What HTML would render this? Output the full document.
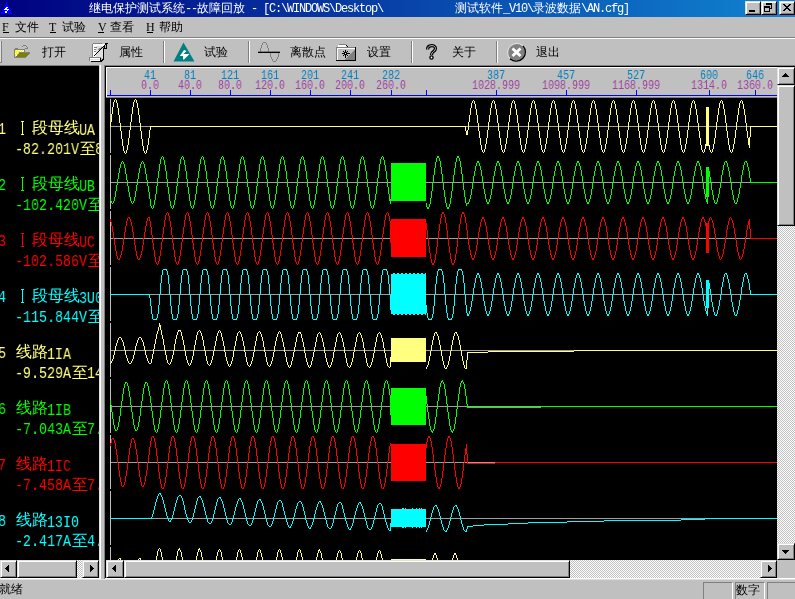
<!DOCTYPE html>
<html><head><meta charset="utf-8">
<style>
*{margin:0;padding:0;box-sizing:border-box}
html,body{width:795px;height:599px;overflow:hidden;background:#c0c0c0;position:relative;font-family:"Liberation Sans",sans-serif}
.a{position:absolute}
.t{position:absolute;white-space:pre;line-height:1;will-change:transform}
.m{font-family:"Liberation Mono",monospace}
.cj{font-size:12px}
.ck{background:repeating-conic-gradient(#fff 0 25%,#c0c0c0 0 50%) 0 0/2px 2px}
.btn{position:absolute;background:#c0c0c0;border-top:1px solid #dfdfdf;border-left:1px solid #dfdfdf;border-right:1px solid #000;border-bottom:1px solid #000;box-shadow:inset 1px 1px 0 #fff,inset -1px -1px 0 #808080}
.lbl{position:absolute;white-space:pre;line-height:16px;font-size:16px}
.rl{font-size:12px;transform:scaleX(0.8333);transform-origin:0 0}
.lm{font-family:"Liberation Mono",monospace;font-size:16px;transform:scaleX(0.8333);transform-origin:0 0}
.cjl{font-size:16px}
</style></head><body>
<!-- title bar -->
<div class="a" style="left:0;top:0;width:795px;height:17px;background:linear-gradient(to right,#000080,#1084d0)"></div>
<svg class="a" style="left:0;top:0" width="16" height="16" shape-rendering="crispEdges"><path d="M6 2h1v2h1v2h1v2h1v2h1v2h1v2H1v-2h1v-2h1v-2h1v-2h1v-2h1z" fill="#0000ff"/><path d="M6 7h2v1h-2zM5 8h2v1h-2zM4 9h5v1h-5zM7 10h1v1h-1zM5 11h2v2h-2z" fill="#fff"/></svg>
<div class="t" style="left:89px;top:2px;color:#fff;font-size:12px;font-weight:normal">继电保护测试系统<span class="m" style="font-size:12px;letter-spacing:-1.2px;font-weight:normal">--</span>故障回放<span class="m" style="font-size:12px;letter-spacing:-1.2px;font-weight:normal"> - [C:\WINDOWS\Desktop\</span></div>
<div class="t" style="left:455px;top:2px;color:#fff;font-size:12px;font-weight:normal">测试软件<span class="m" style="font-size:12px;letter-spacing:-1.2px;font-weight:normal">_V10\</span>录波数据<span class="m" style="font-size:12px;letter-spacing:-1.2px;font-weight:normal">\AN.cfg]</span></div>
<div class="btn" style="left:745px;top:1px;width:16px;height:14px"></div>
<div class="a" style="left:749px;top:10px;width:6px;height:2px;background:#000"></div>
<div class="btn" style="left:761px;top:1px;width:16px;height:14px"></div>
<svg class="a" style="left:0;top:0" width="795" height="17" shape-rendering="crispEdges"><path d="M766 3h6v2h-6zM771 5h1v4h-1zM770 8h1v1h-1zM764 6h6v2h-6zM764 8h1v4h-1zM769 8h1v4h-1zM764 11h6v1h-6z" fill="#000"/></svg>
<div class="btn" style="left:779px;top:1px;width:16px;height:14px"></div>
<svg class="a" style="left:0;top:0" width="795" height="17" shape-rendering="crispEdges"><path d="M783 4h1v1h-1zM784 4h1v1h-1zM789 4h1v1h-1zM790 4h1v1h-1zM784 5h1v1h-1zM785 5h1v1h-1zM788 5h1v1h-1zM789 5h1v1h-1zM785 6h1v1h-1zM786 6h1v1h-1zM787 6h1v1h-1zM788 6h1v1h-1zM786 7h1v1h-1zM787 7h1v1h-1zM785 8h1v1h-1zM786 8h1v1h-1zM787 8h1v1h-1zM788 8h1v1h-1zM784 9h1v1h-1zM785 9h1v1h-1zM788 9h1v1h-1zM789 9h1v1h-1zM783 10h1v1h-1zM784 10h1v1h-1zM789 10h1v1h-1zM790 10h1v1h-1z" fill="#000"/></svg>
<!-- menu -->
<div class="a" style="left:0;top:37px;width:795px;height:1px;background:#808080"></div>
<div class="a" style="left:0;top:38px;width:795px;height:1px;background:#fff"></div>
<div class="t" style="left:2px;top:21px;font-family:'Liberation Serif',serif;font-size:12px;color:#000">F</div><div class="a" style="left:3px;top:32px;width:6px;height:1px;background:#000"></div><div class="t" style="left:15px;top:21px;font-size:12px;color:#000">文件</div>
<div class="t" style="left:49px;top:21px;font-family:'Liberation Serif',serif;font-size:12px;color:#000">T</div><div class="a" style="left:50px;top:32px;width:6px;height:1px;background:#000"></div><div class="t" style="left:62px;top:21px;font-size:12px;color:#000">试验</div>
<div class="t" style="left:98px;top:21px;font-family:'Liberation Serif',serif;font-size:12px;color:#000">V</div><div class="a" style="left:98px;top:32px;width:6px;height:1px;background:#000"></div><div class="t" style="left:110px;top:21px;font-size:12px;color:#000">查看</div>
<div class="t" style="left:146px;top:21px;font-family:'Liberation Serif',serif;font-size:12px;color:#000">H</div><div class="a" style="left:147px;top:32px;width:6px;height:1px;background:#000"></div><div class="t" style="left:159px;top:21px;font-size:12px;color:#000">帮助</div>
<!-- toolbar -->
<div class="a" style="left:0;top:41px;width:1px;height:21px;background:#dfdfdf"></div>
<div class="a" style="left:1px;top:41px;width:1px;height:22px;background:#808080"></div>
<div class="a" style="left:0;top:62px;width:2px;height:1px;background:#808080"></div>
<svg class="a" style="left:0;top:0" width="40" height="64" shape-rendering="crispEdges">
 <rect x="15" y="48" width="3" height="1" fill="#808080"/>
 <rect x="14" y="49" width="1" height="9" fill="#808080"/>
 <rect x="15" y="49" width="10" height="1" fill="#808080"/>
 <rect x="24" y="50" width="1" height="2" fill="#808080"/>
 <rect x="14" y="57" width="12" height="1" fill="#808080"/>
 <path d="M15 50h9v2h-5l-4 5z" fill="#ffff00"/>
 <path d="M16 50h1v1h-1zM18 50h1v1h-1zM20 51h1v1h-1zM22 51h1v1h-1zM17 52h1v1h-1zM15 53h1v1h-1zM16 55h1v1h-1zM19 50h1v1h-1zM21 50h1v1h-1zM23 50h1v1h-1z" fill="#fff"/>
 <path d="M19 53h10l-4 4H15z" fill="#808000"/>
 <rect x="19" y="52" width="11" height="1" fill="#808080"/>
 <path d="M29 53h1v1h-1zM28 54h1v1h-1zM27 55h1v1h-1zM26 56h1v1h-1z" fill="#808080"/>
 <path d="M22 46h1v1h-1zM23 45h3v1h-3zM26 46h1v1h-1zM27 47h1v1h-1zM25 48h3v1h-3zM27 47h1v1h-1z" fill="#808080"/>
</svg>
<div class="t" style="left:42px;top:46px;font-size:12px;color:#000">打开</div>
<svg class="a" style="left:0;top:0" width="112" height="64" shape-rendering="crispEdges">
 <rect x="93" y="43" width="9" height="1" fill="#808080"/>
 <rect x="92" y="44" width="1" height="14" fill="#808080"/>
 <rect x="93" y="44" width="10" height="14" fill="#fff"/>
 <rect x="96" y="46" width="7" height="12" fill="#dfdfdf"/>
 <rect x="103" y="46" width="1" height="14" fill="#000"/>
 <path d="M94 47h3v1h-3zM94 49h2v1h-2zM94 51h2v1h-2z" fill="#808080"/>
 <rect x="89" y="57" width="12" height="4" fill="#fff"/>
 <rect x="89" y="57" width="12" height="1" fill="#808080"/>
 <rect x="89" y="57" width="1" height="4" fill="#808080"/>
 <rect x="90" y="59" width="10" height="1" fill="#dfdfdf"/>
 <rect x="91" y="61" width="11" height="1" fill="#000"/>
 <path d="M100 58h1v3h-1zM101 60h2v1h-2zM102 59h1v1h-1z" fill="#000"/>
 <path d="M98 49h2v1h-2zM99 48h3v1h-3zM101 47h3v1h-3zM103 46h2v1h-2z" fill="#808080"/>
 <path d="M94 55h1v1h-1zM95 54h1v1h-1zM96 53h1v1h-1zM97 52h1v1h-1zM98 51h1v1h-1zM99 50h1v1h-1zM100 49h1v1h-1zM101 48h1v1h-1zM102 47h1v1h-1zM103 46h1v1h-1zM104 45h1v1h-1z" fill="#000"/>
 <path d="M105 44h2v1h-2zM104 46h1v3h-1zM105 48h2v1h-2zM106 45h1v3h-1zM105 43h3v1h-3z" fill="#000"/>
 <path d="M102 45h2v1h-2zM103 44h2v1h-2z" fill="#fff"/>
</svg>
<div class="t" style="left:119px;top:46px;font-size:12px;color:#000">属性</div>
<div class="a" style="left:163px;top:41px;width:1px;height:22px;background:#808080"></div>
<div class="a" style="left:164px;top:41px;width:1px;height:22px;background:#fff"></div>
<svg class="a" style="left:0;top:0" width="200" height="64"><path d="M183.5 42.5L194.5 61.5H173.5z" fill="#008080"/><path d="M184 50L186.5 51L183.5 54H189.5L184 59.5H183V56H180L180.5 55z" fill="#fff"/></svg>
<div class="t" style="left:204px;top:46px;font-size:12px;color:#000">试验</div>
<div class="a" style="left:248px;top:41px;width:1px;height:22px;background:#808080"></div>
<div class="a" style="left:249px;top:41px;width:1px;height:22px;background:#fff"></div>
<svg class="a" style="left:0;top:0" width="290" height="64" shape-rendering="crispEdges">
 <path d="M263 42h3v1h-3zM262 43h1v2h-1zM266 43h1v2h-1zM261 45h1v3h-1zM267 45h1v3h-1zM260 48h1v4h-1zM268 48h1v4h-1z" fill="#808080"/>
 <path d="M270 53h1v4h-1zM278 53h1v4h-1zM271 57h1v2h-1zM277 57h1v2h-1zM272 59h1v2h-1zM276 59h1v2h-1zM273 61h3v1h-3z" fill="#808080"/>
 <rect x="258" y="52" width="22" height="1" fill="#000"/>
 <rect x="258" y="51" width="22" height="1" fill="#404040" opacity="0.5"/>
</svg>
<div class="t" style="left:290px;top:46px;font-size:12px;color:#000">离散点</div>
<svg class="a" style="left:0;top:0" width="360" height="64" shape-rendering="crispEdges">
 <rect x="339" y="44" width="7" height="1" fill="#808080"/>
 <rect x="338" y="45" width="8" height="2" fill="#fff"/>
 <path d="M346 45h1v1h-1zM347 46h1v1h-1z" fill="#000"/>
 <rect x="336" y="47" width="19" height="1" fill="#808080"/>
 <rect x="336" y="47" width="1" height="13" fill="#808080"/>
 <rect x="337" y="48" width="18" height="12" fill="#fff"/>
 <rect x="338" y="49" width="17" height="11" fill="#c0c0c0"/>
 <path d="M355 49V60H344z" fill="#808080"/>
 <rect x="355" y="47" width="1" height="14" fill="#000"/>
 <rect x="336" y="60" width="20" height="1" fill="#000"/>
 <rect x="345" y="50" width="1" height="8" fill="#000"/>
 <rect x="342" y="53" width="8" height="1" fill="#000"/>
 <rect x="344" y="52" width="3" height="3" fill="#000"/>
 <rect x="345" y="53" width="1" height="1" fill="#fff"/>
 <path d="M343 51h1v1h-1zM347 51h1v1h-1zM343 55h1v1h-1zM347 55h1v1h-1z" fill="#000"/>
</svg>
<div class="t" style="left:367px;top:46px;font-size:12px;color:#000">设置</div>
<div class="a" style="left:411px;top:41px;width:1px;height:22px;background:#808080"></div>
<div class="a" style="left:412px;top:41px;width:1px;height:22px;background:#fff"></div>
<svg class="a" style="left:0;top:0" width="450" height="64">
 <path d="M427.5 49.5C427.5 44.5 435.5 44.5 435.5 48.5C435.5 51.5 431.5 51.5 431.5 54.5V55" fill="none" stroke="#000" stroke-width="3.2"/>
 <path d="M427.5 49.5C427.5 44.5 435.5 44.5 435.5 48.5C435.5 51.5 431.5 51.5 431.5 54.5V55" fill="none" stroke="#c0c0c0" stroke-width="1"/>
 <circle cx="431.5" cy="57.5" r="1.6" fill="#fff" stroke="#000" stroke-width="1.4"/>
</svg>
<div class="t" style="left:452px;top:46px;font-size:12px;color:#000">关于</div>
<div class="a" style="left:496px;top:41px;width:1px;height:22px;background:#808080"></div>
<div class="a" style="left:497px;top:41px;width:1px;height:22px;background:#fff"></div>
<svg class="a" style="left:0;top:0" width="530" height="64">
 <circle cx="516.5" cy="52.3" r="9.2" fill="#808080"/>
 <path d="M510 58.8A9.2 9.2 0 0 1 523 45.8" fill="none" stroke="#dfdfdf" stroke-width="1.2"/>
 <path d="M523 45.8A9.2 9.2 0 0 1 510 58.8" fill="none" stroke="#000" stroke-width="1.2"/>
 <path d="M512.5 48.5l8 7.5M520.5 48.5l-8 7.5" stroke="#fff" stroke-width="2.8"/>
</svg>
<div class="t" style="left:536px;top:46px;font-size:12px;color:#000">退出</div>
<!-- left pane -->
<div class="a" style="left:0;top:65px;width:99px;height:1px;background:#808080"></div>
<div class="a" style="left:0;top:66px;width:99px;height:494px;background:#000"></div>
<div class="a" style="left:99px;top:65px;width:1px;height:514px;background:#dfdfdf"></div>
<div class="a" style="left:100px;top:65px;width:1px;height:514px;background:#fff"></div>
<div class="a" style="left:0;top:578px;width:101px;height:1px;background:#fff"></div>
<!-- left labels -->
<div class="a" style="left:0;top:98px;width:99px;height:70px;overflow:hidden;color:#ffff80"><div class="t lm" style="left:-2px;top:24px">1</div><div class="a" style="left:21px;top:23px;width:3px;height:14px;border-top:1px solid #ffff80;border-bottom:1px solid #ffff80"></div><div class="a" style="left:22px;top:23px;width:1px;height:14px;background:#ffff80"></div><div class="t cjl" style="left:32px;top:22px">段母线</div><div class="t lm" style="left:79px;top:25px">UA</div><div class="t lm" style="left:15px;top:44px">-82.201V</div><div class="t cjl" style="left:80px;top:43px">至</div><div class="t lm" style="left:95px;top:44px">8</div></div>
<div class="a" style="left:0;top:154px;width:99px;height:70px;overflow:hidden;color:#00ff00"><div class="t lm" style="left:-2px;top:24px">2</div><div class="a" style="left:21px;top:23px;width:3px;height:14px;border-top:1px solid #00ff00;border-bottom:1px solid #00ff00"></div><div class="a" style="left:22px;top:23px;width:1px;height:14px;background:#00ff00"></div><div class="t cjl" style="left:32px;top:22px">段母线</div><div class="t lm" style="left:79px;top:25px">UB</div><div class="t lm" style="left:15px;top:44px">-102.420V</div><div class="t cjl" style="left:88px;top:43px">至</div><div class="t lm" style="left:103px;top:44px"></div></div>
<div class="a" style="left:0;top:210px;width:99px;height:70px;overflow:hidden;color:#ff0000"><div class="t lm" style="left:-2px;top:24px">3</div><div class="a" style="left:21px;top:23px;width:3px;height:14px;border-top:1px solid #ff0000;border-bottom:1px solid #ff0000"></div><div class="a" style="left:22px;top:23px;width:1px;height:14px;background:#ff0000"></div><div class="t cjl" style="left:32px;top:22px">段母线</div><div class="t lm" style="left:79px;top:25px">UC</div><div class="t lm" style="left:15px;top:44px">-102.586V</div><div class="t cjl" style="left:88px;top:43px">至</div><div class="t lm" style="left:103px;top:44px"></div></div>
<div class="a" style="left:0;top:266px;width:99px;height:70px;overflow:hidden;color:#00ffff"><div class="t lm" style="left:-2px;top:24px">4</div><div class="a" style="left:21px;top:23px;width:3px;height:14px;border-top:1px solid #00ffff;border-bottom:1px solid #00ffff"></div><div class="a" style="left:22px;top:23px;width:1px;height:14px;background:#00ffff"></div><div class="t cjl" style="left:32px;top:22px">段母线</div><div class="t lm" style="left:79px;top:25px">3U0</div><div class="t lm" style="left:15px;top:44px">-115.844V</div><div class="t cjl" style="left:88px;top:43px">至</div><div class="t lm" style="left:103px;top:44px"></div></div>
<div class="a" style="left:0;top:322px;width:99px;height:70px;overflow:hidden;color:#ffff80"><div class="t lm" style="left:-2px;top:24px">5</div><div class="t cjl" style="left:16px;top:22px">线路</div><div class="t lm" style="left:47px;top:25px">1IA</div><div class="t lm" style="left:15px;top:44px">-9.529A</div><div class="t cjl" style="left:72px;top:43px">至</div><div class="t lm" style="left:87px;top:44px">14</div></div>
<div class="a" style="left:0;top:378px;width:99px;height:70px;overflow:hidden;color:#00ff00"><div class="t lm" style="left:-2px;top:24px">6</div><div class="t cjl" style="left:16px;top:22px">线路</div><div class="t lm" style="left:47px;top:25px">1IB</div><div class="t lm" style="left:15px;top:44px">-7.043A</div><div class="t cjl" style="left:72px;top:43px">至</div><div class="t lm" style="left:87px;top:44px">7.</div></div>
<div class="a" style="left:0;top:434px;width:99px;height:70px;overflow:hidden;color:#ff0000"><div class="t lm" style="left:-2px;top:24px">7</div><div class="t cjl" style="left:16px;top:22px">线路</div><div class="t lm" style="left:47px;top:25px">1IC</div><div class="t lm" style="left:15px;top:44px">-7.458A</div><div class="t cjl" style="left:72px;top:43px">至</div><div class="t lm" style="left:87px;top:44px">7.</div></div>
<div class="a" style="left:0;top:490px;width:99px;height:70px;overflow:hidden;color:#00ffff"><div class="t lm" style="left:-2px;top:24px">8</div><div class="t cjl" style="left:16px;top:22px">线路</div><div class="t lm" style="left:47px;top:25px">13I0</div><div class="t lm" style="left:15px;top:44px">-2.417A</div><div class="t cjl" style="left:72px;top:43px">至</div><div class="t lm" style="left:87px;top:44px">4.</div></div>
<!-- left scrollbar -->
<div class="a ck" style="left:0;top:560px;width:99px;height:18px"></div>
<div class="btn" style="left:0;top:560px;width:17px;height:18px"></div>
<svg class="a" style="left:0;top:560px" width="17" height="18" shape-rendering="crispEdges"><path d="M5 8h1v1h-1zM6 7h1v3h-1zM7 6h1v5h-1zM8 5h1v7h-1z" fill="#000"/></svg>
<div class="btn" style="left:17px;top:560px;width:60px;height:18px"></div>
<div class="btn" style="left:82px;top:560px;width:17px;height:18px"></div>
<svg class="a" style="left:82px;top:560px" width="17" height="18" shape-rendering="crispEdges"><path d="M11 8h1v1h-1zM10 7h1v3h-1zM9 6h1v5h-1zM8 5h1v7h-1z" fill="#000"/></svg>
<!-- right pane -->
<div class="a" style="left:104px;top:65px;width:691px;height:1px;background:#808080"></div>
<div class="a" style="left:104px;top:65px;width:1px;height:514px;background:#808080"></div>
<div class="a" style="left:105px;top:66px;width:690px;height:1px;background:#000"></div>
<div class="a" style="left:105px;top:66px;width:1px;height:512px;background:#000"></div>
<div class="a" style="left:105px;top:578px;width:690px;height:1px;background:#fff"></div>
<!-- ruler -->
<div class="a" style="left:106px;top:67px;width:671px;height:31px;background:#c0c0c0;border-top:1px solid #fff;border-left:1px solid #fff"></div>
<div class="a" style="left:106px;top:97px;width:671px;height:1px;background:#808080"></div>
<div class="a" style="left:107px;top:95px;width:670px;height:1px;background:#0000ff"></div>
<div class="a" style="left:110px;top:90px;width:1px;height:5px;background:#0000ff"></div>
<div class="a" style="left:150px;top:90px;width:1px;height:5px;background:#0000ff"></div>
<div class="a" style="left:190px;top:90px;width:1px;height:5px;background:#0000ff"></div>
<div class="a" style="left:230px;top:90px;width:1px;height:5px;background:#0000ff"></div>
<div class="a" style="left:270px;top:90px;width:1px;height:5px;background:#0000ff"></div>
<div class="a" style="left:310px;top:90px;width:1px;height:5px;background:#0000ff"></div>
<div class="a" style="left:350px;top:90px;width:1px;height:5px;background:#0000ff"></div>
<div class="a" style="left:391px;top:90px;width:1px;height:5px;background:#0000ff"></div>
<div class="a" style="left:426px;top:90px;width:1px;height:5px;background:#0000ff"></div>
<div class="a" style="left:496px;top:90px;width:1px;height:5px;background:#0000ff"></div>
<div class="a" style="left:566px;top:90px;width:1px;height:5px;background:#0000ff"></div>
<div class="a" style="left:636px;top:90px;width:1px;height:5px;background:#0000ff"></div>
<div class="a" style="left:709px;top:90px;width:1px;height:5px;background:#0000ff"></div>
<div class="a" style="left:755px;top:90px;width:1px;height:5px;background:#0000ff"></div>
<div class="t m rl" style="left:144px;top:70px;color:#0080c0">41</div>
<div class="t m rl" style="left:141px;top:80px;color:#a040a0">0.0</div>
<div class="t m rl" style="left:184px;top:70px;color:#0080c0">81</div>
<div class="t m rl" style="left:178px;top:80px;color:#a040a0">40.0</div>
<div class="t m rl" style="left:221px;top:70px;color:#0080c0">121</div>
<div class="t m rl" style="left:218px;top:80px;color:#a040a0">80.0</div>
<div class="t m rl" style="left:261px;top:70px;color:#0080c0">161</div>
<div class="t m rl" style="left:255px;top:80px;color:#a040a0">120.0</div>
<div class="t m rl" style="left:301px;top:70px;color:#0080c0">201</div>
<div class="t m rl" style="left:295px;top:80px;color:#a040a0">160.0</div>
<div class="t m rl" style="left:341px;top:70px;color:#0080c0">241</div>
<div class="t m rl" style="left:335px;top:80px;color:#a040a0">200.0</div>
<div class="t m rl" style="left:382px;top:70px;color:#0080c0">282</div>
<div class="t m rl" style="left:376px;top:80px;color:#a040a0">260.0</div>
<div class="t m rl" style="left:487px;top:70px;color:#0080c0">387</div>
<div class="t m rl" style="left:472px;top:80px;color:#a040a0">1028.999</div>
<div class="t m rl" style="left:557px;top:70px;color:#0080c0">457</div>
<div class="t m rl" style="left:542px;top:80px;color:#a040a0">1098.999</div>
<div class="t m rl" style="left:627px;top:70px;color:#0080c0">527</div>
<div class="t m rl" style="left:612px;top:80px;color:#a040a0">1168.999</div>
<div class="t m rl" style="left:700px;top:70px;color:#0080c0">600</div>
<div class="t m rl" style="left:691px;top:80px;color:#a040a0">1314.0</div>
<div class="t m rl" style="left:746px;top:70px;color:#0080c0">646</div>
<div class="t m rl" style="left:737px;top:80px;color:#a040a0">1360.0</div>
<!-- wave area -->
<div class="a" style="left:106px;top:98px;width:671px;height:462px;background:#000"></div>
<svg class="a" style="left:0;top:0" width="795" height="599" shape-rendering="crispEdges">
<path fill="#a0a0a0" d="M110 126h667v1h-667zM110 182h667v1h-667zM110 238h667v1h-667zM110 294h667v1h-667zM110 350h667v1h-667zM110 406h667v1h-667zM110 462h667v1h-667zM110 518h667v1h-667z"/>
<path fill="#c0c0c0" d="M110 99h1v54h-1zM110 155h1v54h-1zM110 211h1v54h-1zM110 267h1v54h-1zM110 323h1v54h-1zM110 379h1v54h-1zM110 435h1v54h-1zM110 491h1v54h-1zM110 547h1v13h-1z"/>
<path fill="#ffff80" d="M115 99h1v1h-1zM135 99h1v1h-1zM473 100h1v1h-1zM493 100h1v1h-1zM513 100h1v1h-1zM533 100h1v1h-1zM553 100h1v1h-1zM573 100h1v1h-1zM593 100h1v1h-1zM613 100h1v1h-1zM633 100h1v1h-1zM653 100h1v1h-1zM673 100h1v1h-1zM693 100h1v1h-1zM721 100h1v1h-1zM741 100h1v1h-1zM114 100h1v2h-1zM134 100h1v2h-1zM116 100h1v3h-1zM136 100h1v3h-1zM472 101h1v2h-1zM492 101h1v2h-1zM512 101h1v2h-1zM532 101h1v2h-1zM552 101h1v2h-1zM572 101h1v2h-1zM592 101h1v2h-1zM612 101h1v2h-1zM632 101h1v2h-1zM652 101h1v2h-1zM672 101h1v2h-1zM692 101h1v2h-1zM720 101h1v2h-1zM740 101h1v2h-1zM474 101h1v3h-1zM494 101h1v3h-1zM514 101h1v3h-1zM534 101h1v3h-1zM554 101h1v3h-1zM574 101h1v3h-1zM594 101h1v3h-1zM614 101h1v3h-1zM634 101h1v3h-1zM654 101h1v3h-1zM674 101h1v3h-1zM694 101h1v3h-1zM722 101h1v3h-1zM742 101h1v3h-1zM113 102h1v5h-1zM133 102h1v5h-1zM117 103h1v5h-1zM137 103h1v5h-1zM471 103h1v5h-1zM491 103h1v5h-1zM511 103h1v5h-1zM531 103h1v5h-1zM551 103h1v5h-1zM571 103h1v5h-1zM591 103h1v5h-1zM611 103h1v5h-1zM631 103h1v5h-1zM651 103h1v5h-1zM671 103h1v5h-1zM691 103h1v5h-1zM719 103h1v5h-1zM739 103h1v5h-1zM475 104h1v5h-1zM495 104h1v5h-1zM515 104h1v5h-1zM535 104h1v5h-1zM555 104h1v5h-1zM575 104h1v5h-1zM595 104h1v5h-1zM615 104h1v5h-1zM635 104h1v5h-1zM655 104h1v5h-1zM675 104h1v5h-1zM695 104h1v5h-1zM723 104h1v5h-1zM743 104h1v5h-1zM112 107h1v7h-1zM132 107h1v7h-1zM118 108h1v7h-1zM138 108h1v7h-1zM470 108h1v7h-1zM490 108h1v7h-1zM510 108h1v7h-1zM530 108h1v7h-1zM550 108h1v7h-1zM570 108h1v7h-1zM590 108h1v7h-1zM610 108h1v7h-1zM630 108h1v7h-1zM650 108h1v7h-1zM670 108h1v7h-1zM690 108h1v7h-1zM718 108h1v7h-1zM738 108h1v7h-1zM476 109h1v6h-1zM496 109h1v6h-1zM516 109h1v6h-1zM536 109h1v6h-1zM556 109h1v6h-1zM576 109h1v6h-1zM596 109h1v6h-1zM616 109h1v6h-1zM636 109h1v6h-1zM656 109h1v6h-1zM676 109h1v6h-1zM696 109h1v6h-1zM724 109h1v6h-1zM744 109h1v6h-1zM111 114h1v8h-1zM131 114h1v8h-1zM469 115h1v7h-1zM489 115h1v7h-1zM509 115h1v7h-1zM529 115h1v7h-1zM549 115h1v7h-1zM569 115h1v7h-1zM589 115h1v7h-1zM609 115h1v7h-1zM629 115h1v7h-1zM649 115h1v7h-1zM669 115h1v7h-1zM689 115h1v7h-1zM717 115h1v7h-1zM737 115h1v7h-1zM119 115h1v8h-1zM139 115h1v8h-1zM477 115h1v8h-1zM497 115h1v8h-1zM517 115h1v8h-1zM537 115h1v8h-1zM557 115h1v8h-1zM577 115h1v8h-1zM597 115h1v8h-1zM617 115h1v8h-1zM637 115h1v8h-1zM657 115h1v8h-1zM677 115h1v8h-1zM697 115h1v8h-1zM725 115h1v8h-1zM745 115h1v8h-1zM110 122h1v5h-1zM130 122h1v8h-1zM468 122h1v8h-1zM488 122h1v8h-1zM508 122h1v8h-1zM528 122h1v8h-1zM548 122h1v8h-1zM568 122h1v8h-1zM588 122h1v8h-1zM608 122h1v8h-1zM628 122h1v8h-1zM648 122h1v8h-1zM668 122h1v8h-1zM688 122h1v8h-1zM716 122h1v8h-1zM736 122h1v8h-1zM120 123h1v8h-1zM140 123h1v8h-1zM478 123h1v8h-1zM498 123h1v8h-1zM518 123h1v8h-1zM538 123h1v8h-1zM558 123h1v8h-1zM578 123h1v8h-1zM598 123h1v8h-1zM618 123h1v8h-1zM638 123h1v8h-1zM658 123h1v8h-1zM678 123h1v8h-1zM698 123h1v8h-1zM726 123h1v8h-1zM746 123h1v8h-1zM151 126h314v1h-314zM751 126h26v1h-26zM150 126h1v4h-1zM465 126h1v5h-1zM750 126h1v11h-1zM467 130h1v5h-1zM129 130h1v8h-1zM149 130h1v8h-1zM487 130h1v8h-1zM507 130h1v8h-1zM527 130h1v8h-1zM547 130h1v8h-1zM567 130h1v8h-1zM587 130h1v8h-1zM607 130h1v8h-1zM627 130h1v8h-1zM647 130h1v8h-1zM667 130h1v8h-1zM687 130h1v8h-1zM715 130h1v8h-1zM735 130h1v8h-1zM466 131h1v4h-1zM479 131h1v7h-1zM499 131h1v7h-1zM519 131h1v7h-1zM539 131h1v7h-1zM559 131h1v7h-1zM579 131h1v7h-1zM599 131h1v7h-1zM619 131h1v7h-1zM639 131h1v7h-1zM659 131h1v7h-1zM679 131h1v7h-1zM699 131h1v7h-1zM727 131h1v7h-1zM747 131h1v7h-1zM121 131h1v8h-1zM141 131h1v8h-1zM707 134h1v4h-1zM749 137h1v11h-1zM486 138h1v6h-1zM506 138h1v6h-1zM526 138h1v6h-1zM546 138h1v6h-1zM566 138h1v6h-1zM586 138h1v6h-1zM606 138h1v6h-1zM626 138h1v6h-1zM646 138h1v6h-1zM666 138h1v6h-1zM686 138h1v6h-1zM706 138h1v6h-1zM714 138h1v6h-1zM734 138h1v6h-1zM128 138h1v7h-1zM148 138h1v7h-1zM480 138h1v7h-1zM500 138h1v7h-1zM520 138h1v7h-1zM540 138h1v7h-1zM560 138h1v7h-1zM580 138h1v7h-1zM600 138h1v7h-1zM620 138h1v7h-1zM640 138h1v7h-1zM660 138h1v7h-1zM680 138h1v7h-1zM700 138h1v7h-1zM708 138h1v7h-1zM728 138h1v7h-1zM748 138h1v7h-1zM122 139h1v7h-1zM142 139h1v7h-1zM485 144h1v5h-1zM505 144h1v5h-1zM525 144h1v5h-1zM545 144h1v5h-1zM565 144h1v5h-1zM585 144h1v5h-1zM605 144h1v5h-1zM625 144h1v5h-1zM645 144h1v5h-1zM665 144h1v5h-1zM685 144h1v5h-1zM705 144h1v5h-1zM713 144h1v5h-1zM733 144h1v5h-1zM127 145h1v5h-1zM147 145h1v5h-1zM481 145h1v5h-1zM501 145h1v5h-1zM521 145h1v5h-1zM541 145h1v5h-1zM561 145h1v5h-1zM581 145h1v5h-1zM601 145h1v5h-1zM621 145h1v5h-1zM641 145h1v5h-1zM661 145h1v5h-1zM681 145h1v5h-1zM701 145h1v5h-1zM709 145h1v5h-1zM729 145h1v5h-1zM123 146h1v5h-1zM143 146h1v5h-1zM484 149h1v3h-1zM504 149h1v3h-1zM524 149h1v3h-1zM544 149h1v3h-1zM564 149h1v3h-1zM584 149h1v3h-1zM604 149h1v3h-1zM624 149h1v3h-1zM644 149h1v3h-1zM664 149h1v3h-1zM684 149h1v3h-1zM704 149h1v3h-1zM712 149h1v3h-1zM732 149h1v3h-1zM482 150h1v2h-1zM502 150h1v2h-1zM522 150h1v2h-1zM542 150h1v2h-1zM562 150h1v2h-1zM582 150h1v2h-1zM602 150h1v2h-1zM622 150h1v2h-1zM642 150h1v2h-1zM662 150h1v2h-1zM682 150h1v2h-1zM702 150h1v2h-1zM710 150h1v2h-1zM730 150h1v2h-1zM126 150h1v3h-1zM146 150h1v3h-1zM124 151h1v2h-1zM144 151h1v2h-1zM483 152h1v1h-1zM503 152h1v1h-1zM523 152h1v1h-1zM543 152h1v1h-1zM563 152h1v1h-1zM583 152h1v1h-1zM603 152h1v1h-1zM623 152h1v1h-1zM643 152h1v1h-1zM663 152h1v1h-1zM683 152h1v1h-1zM703 152h1v1h-1zM711 152h1v1h-1zM731 152h1v1h-1zM125 153h1v1h-1zM145 153h1v1h-1zM159 323h1v4h-1zM160 325h1v5h-1zM158 327h1v4h-1zM179 330h1v1h-1zM199 330h1v1h-1zM219 330h1v1h-1zM178 330h1v2h-1zM180 330h1v2h-1zM161 330h1v5h-1zM198 331h1v1h-1zM239 331h1v1h-1zM259 331h1v1h-1zM279 331h1v1h-1zM200 331h1v2h-1zM218 331h1v2h-1zM220 331h1v2h-1zM157 331h1v3h-1zM238 332h1v1h-1zM258 332h1v1h-1zM299 332h1v1h-1zM319 332h1v1h-1zM339 332h1v1h-1zM359 332h1v1h-1zM379 332h1v1h-1zM435 332h1v1h-1zM455 332h1v1h-1zM240 332h1v2h-1zM260 332h1v2h-1zM278 332h1v2h-1zM280 332h1v2h-1zM298 332h1v2h-1zM300 332h1v2h-1zM436 332h1v2h-1zM456 332h1v2h-1zM177 332h1v3h-1zM197 332h1v3h-1zM181 332h1v4h-1zM318 333h1v1h-1zM338 333h1v1h-1zM358 333h1v1h-1zM378 333h1v1h-1zM320 333h1v2h-1zM340 333h1v2h-1zM360 333h1v2h-1zM380 333h1v2h-1zM201 333h1v3h-1zM217 333h1v3h-1zM237 333h1v3h-1zM257 333h1v3h-1zM434 333h1v3h-1zM454 333h1v3h-1zM221 333h1v4h-1zM437 334h1v2h-1zM457 334h1v2h-1zM241 334h1v3h-1zM261 334h1v3h-1zM277 334h1v3h-1zM297 334h1v3h-1zM317 334h1v3h-1zM337 334h1v3h-1zM357 334h1v3h-1zM377 334h1v3h-1zM281 334h1v4h-1zM301 334h1v4h-1zM156 334h1v5h-1zM321 335h1v3h-1zM341 335h1v3h-1zM361 335h1v3h-1zM381 335h1v3h-1zM162 335h1v4h-1zM176 335h1v4h-1zM196 335h1v5h-1zM182 336h1v4h-1zM202 336h1v4h-1zM433 336h1v4h-1zM438 336h1v4h-1zM453 336h1v4h-1zM458 336h1v4h-1zM216 336h1v5h-1zM236 336h1v5h-1zM256 336h1v5h-1zM119 337h2v1h-2zM139 337h2v1h-2zM222 337h1v4h-1zM242 337h1v4h-1zM262 337h1v4h-1zM276 337h1v4h-1zM296 337h1v5h-1zM316 337h1v5h-1zM336 337h1v5h-1zM356 337h1v5h-1zM376 337h1v5h-1zM118 338h1v2h-1zM121 338h1v2h-1zM138 338h1v2h-1zM141 338h1v2h-1zM282 338h1v4h-1zM302 338h1v4h-1zM322 338h1v4h-1zM342 338h1v4h-1zM362 338h1v4h-1zM382 338h1v4h-1zM155 339h1v5h-1zM175 339h1v5h-1zM163 339h1v6h-1zM122 340h1v2h-1zM142 340h1v2h-1zM117 340h1v3h-1zM137 340h1v3h-1zM183 340h1v5h-1zM195 340h1v5h-1zM432 340h1v5h-1zM439 340h1v5h-1zM452 340h1v5h-1zM459 340h1v5h-1zM203 340h1v6h-1zM215 341h1v5h-1zM223 341h1v5h-1zM235 341h1v5h-1zM243 341h1v5h-1zM255 341h1v5h-1zM275 341h1v5h-1zM263 341h1v6h-1zM123 342h1v4h-1zM143 342h1v4h-1zM283 342h1v5h-1zM295 342h1v5h-1zM303 342h1v5h-1zM315 342h1v5h-1zM323 342h1v5h-1zM335 342h1v5h-1zM343 342h1v5h-1zM355 342h1v5h-1zM375 342h1v5h-1zM363 342h1v6h-1zM383 342h1v6h-1zM116 343h1v3h-1zM136 343h1v3h-1zM154 344h1v5h-1zM174 344h1v6h-1zM164 345h1v5h-1zM194 345h1v5h-1zM440 345h1v5h-1zM460 345h1v5h-1zM184 345h1v6h-1zM431 345h1v6h-1zM451 345h1v6h-1zM124 346h1v4h-1zM144 346h1v4h-1zM115 346h1v5h-1zM135 346h1v5h-1zM204 346h1v5h-1zM214 346h1v5h-1zM234 346h1v5h-1zM224 346h1v6h-1zM244 346h1v6h-1zM254 346h1v6h-1zM274 346h1v6h-1zM264 347h1v5h-1zM284 347h1v5h-1zM294 347h1v5h-1zM314 347h1v5h-1zM334 347h1v5h-1zM354 347h1v5h-1zM304 347h1v6h-1zM324 347h1v6h-1zM344 347h1v6h-1zM374 347h1v6h-1zM364 348h1v5h-1zM384 348h1v5h-1zM153 349h1v5h-1zM574 350h203v1h-203zM125 350h1v5h-1zM145 350h1v5h-1zM165 350h1v5h-1zM173 350h1v5h-1zM193 350h1v6h-1zM441 350h1v6h-1zM461 350h1v6h-1zM488 351h86v1h-86zM114 351h1v4h-1zM134 351h1v4h-1zM185 351h1v5h-1zM205 351h1v5h-1zM213 351h1v5h-1zM430 351h1v5h-1zM450 351h1v5h-1zM233 351h1v6h-1zM468 352h20v1h-20zM225 352h1v5h-1zM245 352h1v5h-1zM253 352h1v5h-1zM265 352h1v5h-1zM273 352h1v5h-1zM285 352h1v5h-1zM293 352h1v5h-1zM313 352h1v5h-1zM333 352h1v6h-1zM353 352h1v6h-1zM467 352h1v8h-1zM305 353h1v5h-1zM325 353h1v5h-1zM345 353h1v5h-1zM365 353h1v5h-1zM373 353h1v5h-1zM385 353h1v5h-1zM152 354h1v5h-1zM126 355h1v3h-1zM146 355h1v3h-1zM113 355h1v4h-1zM133 355h1v4h-1zM172 355h1v4h-1zM166 355h1v5h-1zM186 356h1v4h-1zM192 356h1v4h-1zM212 356h1v4h-1zM206 356h1v5h-1zM429 356h1v5h-1zM442 356h1v5h-1zM449 356h1v5h-1zM462 356h1v5h-1zM226 357h1v4h-1zM232 357h1v4h-1zM252 357h1v4h-1zM272 357h1v4h-1zM292 357h1v4h-1zM312 357h1v4h-1zM246 357h1v5h-1zM266 357h1v5h-1zM286 357h1v5h-1zM390 357h1v10h-1zM127 358h1v3h-1zM147 358h1v3h-1zM306 358h1v4h-1zM326 358h1v4h-1zM332 358h1v4h-1zM352 358h1v4h-1zM372 358h1v4h-1zM346 358h1v5h-1zM366 358h1v5h-1zM386 358h1v5h-1zM112 359h1v2h-1zM132 359h1v2h-1zM171 359h1v3h-1zM151 359h1v4h-1zM167 360h1v3h-1zM187 360h1v3h-1zM191 360h1v3h-1zM211 360h1v3h-1zM466 360h1v9h-1zM111 361h1v2h-1zM128 361h1v2h-1zM131 361h1v2h-1zM148 361h1v2h-1zM207 361h1v3h-1zM227 361h1v3h-1zM231 361h1v3h-1zM251 361h1v3h-1zM271 361h1v3h-1zM291 361h1v4h-1zM311 361h1v4h-1zM428 361h1v4h-1zM443 361h1v4h-1zM448 361h1v4h-1zM463 361h1v4h-1zM170 362h1v2h-1zM247 362h1v3h-1zM267 362h1v3h-1zM287 362h1v3h-1zM307 362h1v3h-1zM327 362h1v3h-1zM331 362h1v3h-1zM351 362h1v3h-1zM371 362h1v3h-1zM110 363h1v1h-1zM129 363h2v1h-2zM149 363h2v1h-2zM168 363h1v1h-1zM188 363h1v2h-1zM190 363h1v2h-1zM210 363h1v2h-1zM347 363h1v3h-1zM367 363h1v3h-1zM387 363h1v3h-1zM169 364h1v1h-1zM208 364h1v1h-1zM228 364h1v2h-1zM230 364h1v2h-1zM250 364h1v2h-1zM270 364h1v2h-1zM189 365h1v1h-1zM209 365h1v1h-1zM248 365h1v1h-1zM268 365h1v1h-1zM288 365h1v2h-1zM290 365h1v2h-1zM308 365h1v2h-1zM310 365h1v2h-1zM328 365h1v2h-1zM330 365h1v2h-1zM350 365h1v2h-1zM370 365h1v2h-1zM427 365h1v2h-1zM447 365h1v2h-1zM444 365h1v3h-1zM464 365h1v3h-1zM229 366h1v1h-1zM249 366h1v1h-1zM269 366h1v1h-1zM348 366h1v1h-1zM368 366h1v1h-1zM388 366h1v1h-1zM289 367h1v1h-1zM309 367h1v1h-1zM329 367h1v1h-1zM349 367h1v1h-1zM369 367h1v1h-1zM389 367h1v1h-1zM426 367h1v2h-1zM446 367h1v2h-1zM445 368h1v1h-1zM465 368h1v1h-1zM159 548h1v1h-1zM179 548h1v2h-1zM199 548h1v2h-1zM219 549h1v1h-1zM239 549h1v1h-1zM259 549h1v1h-1zM279 549h1v1h-1zM299 549h1v1h-1zM158 549h1v2h-1zM178 549h1v2h-1zM319 549h1v2h-1zM160 549h1v3h-1zM198 549h1v3h-1zM339 550h1v1h-1zM359 550h1v1h-1zM379 550h1v1h-1zM180 550h1v2h-1zM200 550h1v2h-1zM218 550h1v2h-1zM220 550h1v2h-1zM238 550h1v2h-1zM258 550h1v2h-1zM278 550h1v2h-1zM298 550h1v2h-1zM240 550h1v3h-1zM260 550h1v3h-1zM280 550h1v3h-1zM300 550h1v3h-1zM318 550h1v3h-1zM320 551h1v2h-1zM338 551h1v2h-1zM340 551h1v2h-1zM358 551h1v2h-1zM360 551h1v2h-1zM378 551h1v2h-1zM380 551h1v3h-1zM157 551h1v5h-1zM177 551h1v5h-1zM197 552h1v4h-1zM217 552h1v4h-1zM161 552h1v5h-1zM181 552h1v5h-1zM201 552h1v5h-1zM221 552h1v5h-1zM237 552h1v5h-1zM257 552h1v5h-1zM277 552h1v5h-1zM297 552h1v5h-1zM434 553h2v2h-2zM454 553h2v2h-2zM241 553h1v4h-1zM261 553h1v4h-1zM281 553h1v4h-1zM301 553h1v4h-1zM317 553h1v4h-1zM337 553h1v4h-1zM357 553h1v4h-1zM377 553h1v4h-1zM321 553h1v5h-1zM341 553h1v5h-1zM361 553h1v5h-1zM381 554h1v4h-1zM433 555h1v3h-1zM436 555h1v3h-1zM453 555h1v3h-1zM456 555h1v3h-1zM156 556h1v4h-1zM176 556h1v4h-1zM196 556h1v4h-1zM216 556h1v4h-1zM162 557h1v3h-1zM182 557h1v3h-1zM202 557h1v3h-1zM222 557h1v3h-1zM236 557h1v3h-1zM242 557h1v3h-1zM256 557h1v3h-1zM262 557h1v3h-1zM276 557h1v3h-1zM282 557h1v3h-1zM296 557h1v3h-1zM302 557h1v3h-1zM316 557h1v3h-1zM336 557h1v3h-1zM356 557h1v3h-1zM376 557h1v3h-1zM119 558h1v1h-1zM139 558h1v1h-1zM120 558h1v2h-1zM140 558h1v2h-1zM322 558h1v2h-1zM342 558h1v2h-1zM362 558h1v2h-1zM382 558h1v2h-1zM432 558h1v2h-1zM437 558h1v2h-1zM452 558h1v2h-1zM457 558h1v2h-1zM118 559h1v1h-1zM138 559h1v1h-1z"/>
<path fill="#00ff00" d="M162 156h1v1h-1zM182 156h1v1h-1zM202 156h1v1h-1zM222 156h1v1h-1zM242 156h1v1h-1zM262 156h1v1h-1zM282 156h1v1h-1zM302 156h1v1h-1zM322 156h1v1h-1zM342 156h1v1h-1zM362 156h1v1h-1zM382 156h1v1h-1zM437 156h2v2h-2zM457 156h2v2h-2zM161 157h1v2h-1zM181 157h1v2h-1zM201 157h1v2h-1zM221 157h1v2h-1zM241 157h1v2h-1zM261 157h1v2h-1zM281 157h1v2h-1zM301 157h1v2h-1zM321 157h1v2h-1zM341 157h1v2h-1zM361 157h1v2h-1zM381 157h1v2h-1zM163 157h1v3h-1zM183 157h1v3h-1zM203 157h1v3h-1zM223 157h1v3h-1zM243 157h1v3h-1zM263 157h1v3h-1zM283 157h1v3h-1zM303 157h1v3h-1zM323 157h1v3h-1zM343 157h1v3h-1zM363 157h1v3h-1zM383 157h1v3h-1zM439 158h1v3h-1zM459 158h1v3h-1zM436 158h1v4h-1zM456 158h1v4h-1zM160 159h1v5h-1zM180 159h1v5h-1zM200 159h1v5h-1zM220 159h1v5h-1zM240 159h1v5h-1zM260 159h1v5h-1zM280 159h1v5h-1zM300 159h1v5h-1zM320 159h1v5h-1zM340 159h1v5h-1zM360 159h1v5h-1zM380 159h1v5h-1zM164 160h1v5h-1zM184 160h1v5h-1zM204 160h1v5h-1zM224 160h1v5h-1zM244 160h1v5h-1zM264 160h1v5h-1zM284 160h1v5h-1zM304 160h1v5h-1zM324 160h1v5h-1zM344 160h1v5h-1zM364 160h1v5h-1zM384 160h1v5h-1zM122 161h1v1h-1zM142 161h1v1h-1zM725 161h1v1h-1zM745 161h1v1h-1zM477 161h2v2h-2zM497 161h2v2h-2zM517 161h2v2h-2zM537 161h2v2h-2zM557 161h2v2h-2zM577 161h2v2h-2zM597 161h2v2h-2zM617 161h2v2h-2zM637 161h2v2h-2zM657 161h2v2h-2zM677 161h2v2h-2zM697 161h2v2h-2zM726 161h1v2h-1zM746 161h1v2h-1zM440 161h1v6h-1zM460 161h1v6h-1zM121 162h1v2h-1zM123 162h1v2h-1zM141 162h1v2h-1zM143 162h1v2h-1zM724 162h1v3h-1zM744 162h1v3h-1zM435 162h1v6h-1zM455 162h1v6h-1zM476 163h1v3h-1zM479 163h1v3h-1zM496 163h1v3h-1zM499 163h1v3h-1zM516 163h1v3h-1zM519 163h1v3h-1zM536 163h1v3h-1zM539 163h1v3h-1zM556 163h1v3h-1zM559 163h1v3h-1zM576 163h1v3h-1zM579 163h1v3h-1zM596 163h1v3h-1zM599 163h1v3h-1zM616 163h1v3h-1zM619 163h1v3h-1zM636 163h1v3h-1zM639 163h1v3h-1zM656 163h1v3h-1zM659 163h1v3h-1zM676 163h1v3h-1zM679 163h1v3h-1zM696 163h1v3h-1zM699 163h1v3h-1zM727 163h1v4h-1zM747 163h1v4h-1zM120 164h1v4h-1zM124 164h1v4h-1zM140 164h1v4h-1zM144 164h1v4h-1zM159 164h1v7h-1zM179 164h1v7h-1zM199 164h1v7h-1zM219 164h1v7h-1zM239 164h1v7h-1zM259 164h1v7h-1zM279 164h1v7h-1zM299 164h1v7h-1zM319 164h1v7h-1zM339 164h1v7h-1zM359 164h1v7h-1zM379 164h1v7h-1zM723 165h1v5h-1zM743 165h1v5h-1zM165 165h1v6h-1zM185 165h1v6h-1zM205 165h1v6h-1zM225 165h1v6h-1zM245 165h1v6h-1zM265 165h1v6h-1zM285 165h1v6h-1zM305 165h1v6h-1zM325 165h1v6h-1zM345 165h1v6h-1zM365 165h1v6h-1zM385 165h1v6h-1zM480 166h1v4h-1zM500 166h1v4h-1zM520 166h1v4h-1zM540 166h1v4h-1zM560 166h1v4h-1zM580 166h1v4h-1zM600 166h1v4h-1zM620 166h1v4h-1zM640 166h1v4h-1zM660 166h1v4h-1zM680 166h1v4h-1zM700 166h1v4h-1zM475 166h1v5h-1zM495 166h1v5h-1zM515 166h1v5h-1zM535 166h1v5h-1zM555 166h1v5h-1zM575 166h1v5h-1zM595 166h1v5h-1zM615 166h1v5h-1zM635 166h1v5h-1zM655 166h1v5h-1zM675 166h1v5h-1zM695 166h1v5h-1zM728 167h1v4h-1zM748 167h1v4h-1zM441 167h1v7h-1zM461 167h1v7h-1zM119 168h1v5h-1zM139 168h1v5h-1zM125 168h1v6h-1zM145 168h1v6h-1zM434 168h1v7h-1zM454 168h1v7h-1zM708 168h1v18h-1zM722 170h1v5h-1zM742 170h1v5h-1zM481 170h1v6h-1zM501 170h1v6h-1zM521 170h1v6h-1zM541 170h1v6h-1zM561 170h1v6h-1zM581 170h1v6h-1zM601 170h1v6h-1zM621 170h1v6h-1zM641 170h1v6h-1zM661 170h1v6h-1zM681 170h1v6h-1zM701 170h1v6h-1zM474 171h1v5h-1zM494 171h1v5h-1zM514 171h1v5h-1zM534 171h1v5h-1zM554 171h1v5h-1zM574 171h1v5h-1zM594 171h1v5h-1zM614 171h1v5h-1zM634 171h1v5h-1zM654 171h1v5h-1zM674 171h1v5h-1zM694 171h1v5h-1zM709 171h1v6h-1zM729 171h1v6h-1zM158 171h1v7h-1zM178 171h1v7h-1zM198 171h1v7h-1zM218 171h1v7h-1zM238 171h1v7h-1zM258 171h1v7h-1zM278 171h1v7h-1zM298 171h1v7h-1zM318 171h1v7h-1zM338 171h1v7h-1zM358 171h1v7h-1zM378 171h1v7h-1zM749 171h1v7h-1zM166 171h1v8h-1zM186 171h1v8h-1zM206 171h1v8h-1zM226 171h1v8h-1zM246 171h1v8h-1zM266 171h1v8h-1zM286 171h1v8h-1zM306 171h1v8h-1zM326 171h1v8h-1zM346 171h1v8h-1zM366 171h1v8h-1zM386 171h1v8h-1zM118 173h1v6h-1zM138 173h1v6h-1zM126 174h1v6h-1zM146 174h1v6h-1zM442 174h1v8h-1zM462 174h1v8h-1zM721 175h1v7h-1zM741 175h1v7h-1zM433 175h1v8h-1zM453 175h1v8h-1zM482 176h1v6h-1zM502 176h1v6h-1zM522 176h1v6h-1zM542 176h1v6h-1zM562 176h1v6h-1zM582 176h1v6h-1zM602 176h1v6h-1zM622 176h1v6h-1zM642 176h1v6h-1zM662 176h1v6h-1zM682 176h1v6h-1zM702 176h1v6h-1zM473 176h1v7h-1zM493 176h1v7h-1zM513 176h1v7h-1zM533 176h1v7h-1zM553 176h1v7h-1zM573 176h1v7h-1zM593 176h1v7h-1zM613 176h1v7h-1zM633 176h1v7h-1zM653 176h1v7h-1zM673 176h1v7h-1zM693 176h1v7h-1zM710 177h1v6h-1zM730 177h1v6h-1zM750 178h1v5h-1zM157 178h1v8h-1zM177 178h1v8h-1zM197 178h1v8h-1zM217 178h1v8h-1zM237 178h1v8h-1zM257 178h1v8h-1zM277 178h1v8h-1zM297 178h1v8h-1zM317 178h1v8h-1zM337 178h1v8h-1zM357 178h1v8h-1zM377 178h1v8h-1zM117 179h1v6h-1zM137 179h1v6h-1zM167 179h1v8h-1zM187 179h1v8h-1zM207 179h1v8h-1zM227 179h1v8h-1zM247 179h1v8h-1zM267 179h1v8h-1zM287 179h1v8h-1zM307 179h1v8h-1zM327 179h1v8h-1zM347 179h1v8h-1zM367 179h1v8h-1zM387 179h1v8h-1zM127 180h1v6h-1zM147 180h1v6h-1zM751 182h26v1h-26zM720 182h1v6h-1zM740 182h1v6h-1zM483 182h1v7h-1zM503 182h1v7h-1zM523 182h1v7h-1zM543 182h1v7h-1zM563 182h1v7h-1zM583 182h1v7h-1zM603 182h1v7h-1zM623 182h1v7h-1zM643 182h1v7h-1zM663 182h1v7h-1zM683 182h1v7h-1zM703 182h1v7h-1zM443 182h1v8h-1zM463 182h1v8h-1zM472 183h1v6h-1zM492 183h1v6h-1zM512 183h1v6h-1zM532 183h1v6h-1zM552 183h1v6h-1zM572 183h1v6h-1zM592 183h1v6h-1zM612 183h1v6h-1zM632 183h1v6h-1zM652 183h1v6h-1zM672 183h1v6h-1zM692 183h1v6h-1zM711 183h1v7h-1zM731 183h1v7h-1zM432 183h1v8h-1zM452 183h1v8h-1zM116 185h1v6h-1zM136 185h1v6h-1zM128 186h1v6h-1zM148 186h1v6h-1zM156 186h1v8h-1zM176 186h1v8h-1zM196 186h1v8h-1zM216 186h1v8h-1zM236 186h1v8h-1zM256 186h1v8h-1zM276 186h1v8h-1zM296 186h1v8h-1zM316 186h1v8h-1zM336 186h1v8h-1zM356 186h1v8h-1zM376 186h1v8h-1zM707 186h1v18h-1zM168 187h1v7h-1zM188 187h1v7h-1zM208 187h1v7h-1zM228 187h1v7h-1zM248 187h1v7h-1zM268 187h1v7h-1zM288 187h1v7h-1zM308 187h1v7h-1zM328 187h1v7h-1zM348 187h1v7h-1zM368 187h1v7h-1zM388 187h1v7h-1zM719 188h1v6h-1zM739 188h1v6h-1zM484 189h1v5h-1zM504 189h1v5h-1zM524 189h1v5h-1zM544 189h1v5h-1zM564 189h1v5h-1zM584 189h1v5h-1zM604 189h1v5h-1zM624 189h1v5h-1zM644 189h1v5h-1zM664 189h1v5h-1zM684 189h1v5h-1zM704 189h1v5h-1zM471 189h1v6h-1zM491 189h1v6h-1zM511 189h1v6h-1zM531 189h1v6h-1zM551 189h1v6h-1zM571 189h1v6h-1zM591 189h1v6h-1zM611 189h1v6h-1zM631 189h1v6h-1zM651 189h1v6h-1zM671 189h1v6h-1zM691 189h1v6h-1zM712 190h1v5h-1zM732 190h1v5h-1zM444 190h1v7h-1zM464 190h1v7h-1zM115 191h1v6h-1zM135 191h1v6h-1zM431 191h1v7h-1zM451 191h1v7h-1zM129 192h1v5h-1zM149 192h1v7h-1zM718 194h1v4h-1zM738 194h1v4h-1zM485 194h1v5h-1zM505 194h1v5h-1zM525 194h1v5h-1zM545 194h1v5h-1zM565 194h1v5h-1zM585 194h1v5h-1zM605 194h1v5h-1zM625 194h1v5h-1zM645 194h1v5h-1zM665 194h1v5h-1zM685 194h1v5h-1zM705 194h1v5h-1zM155 194h1v6h-1zM175 194h1v6h-1zM195 194h1v6h-1zM215 194h1v6h-1zM235 194h1v6h-1zM255 194h1v6h-1zM275 194h1v6h-1zM295 194h1v6h-1zM315 194h1v6h-1zM335 194h1v6h-1zM355 194h1v6h-1zM375 194h1v6h-1zM169 194h1v7h-1zM189 194h1v7h-1zM209 194h1v7h-1zM229 194h1v7h-1zM249 194h1v7h-1zM269 194h1v7h-1zM289 194h1v7h-1zM309 194h1v7h-1zM329 194h1v7h-1zM349 194h1v7h-1zM369 194h1v7h-1zM389 194h1v7h-1zM470 195h1v4h-1zM490 195h1v4h-1zM510 195h1v4h-1zM530 195h1v4h-1zM550 195h1v4h-1zM570 195h1v4h-1zM590 195h1v4h-1zM610 195h1v4h-1zM630 195h1v4h-1zM650 195h1v4h-1zM670 195h1v4h-1zM690 195h1v4h-1zM713 195h1v5h-1zM733 195h1v5h-1zM114 197h1v4h-1zM130 197h1v4h-1zM134 197h1v4h-1zM445 197h1v6h-1zM465 197h1v6h-1zM717 198h1v4h-1zM737 198h1v4h-1zM430 198h1v6h-1zM450 198h1v6h-1zM110 199h1v2h-1zM469 199h1v3h-1zM486 199h1v3h-1zM489 199h1v3h-1zM506 199h1v3h-1zM509 199h1v3h-1zM526 199h1v3h-1zM529 199h1v3h-1zM546 199h1v3h-1zM549 199h1v3h-1zM566 199h1v3h-1zM569 199h1v3h-1zM586 199h1v3h-1zM589 199h1v3h-1zM606 199h1v3h-1zM609 199h1v3h-1zM626 199h1v3h-1zM629 199h1v3h-1zM646 199h1v3h-1zM649 199h1v3h-1zM666 199h1v3h-1zM669 199h1v3h-1zM686 199h1v3h-1zM689 199h1v3h-1zM706 199h1v3h-1zM390 199h1v5h-1zM150 199h1v7h-1zM714 200h1v3h-1zM734 200h1v3h-1zM154 200h1v5h-1zM174 200h1v5h-1zM194 200h1v5h-1zM214 200h1v5h-1zM234 200h1v5h-1zM254 200h1v5h-1zM274 200h1v5h-1zM294 200h1v5h-1zM314 200h1v5h-1zM334 200h1v5h-1zM354 200h1v5h-1zM374 200h1v5h-1zM111 201h1v2h-1zM113 201h1v2h-1zM131 201h1v2h-1zM133 201h1v2h-1zM170 201h1v5h-1zM190 201h1v5h-1zM210 201h1v5h-1zM230 201h1v5h-1zM250 201h1v5h-1zM270 201h1v5h-1zM290 201h1v5h-1zM310 201h1v5h-1zM330 201h1v5h-1zM350 201h1v5h-1zM370 201h1v5h-1zM468 202h1v2h-1zM487 202h2v2h-2zM507 202h2v2h-2zM527 202h2v2h-2zM547 202h2v2h-2zM567 202h2v2h-2zM587 202h2v2h-2zM607 202h2v2h-2zM627 202h2v2h-2zM647 202h2v2h-2zM667 202h2v2h-2zM687 202h2v2h-2zM716 202h1v2h-1zM736 202h1v2h-1zM112 203h1v1h-1zM132 203h1v1h-1zM467 203h1v1h-1zM715 203h1v1h-1zM735 203h1v1h-1zM466 203h1v3h-1zM426 203h1v4h-1zM446 203h1v4h-1zM429 204h1v3h-1zM449 204h1v3h-1zM153 205h1v3h-1zM173 205h1v3h-1zM193 205h1v3h-1zM213 205h1v3h-1zM233 205h1v3h-1zM253 205h1v3h-1zM273 205h1v3h-1zM293 205h1v3h-1zM313 205h1v3h-1zM333 205h1v3h-1zM353 205h1v3h-1zM373 205h1v3h-1zM151 206h1v2h-1zM171 206h1v2h-1zM191 206h1v2h-1zM211 206h1v2h-1zM231 206h1v2h-1zM251 206h1v2h-1zM271 206h1v2h-1zM291 206h1v2h-1zM311 206h1v2h-1zM331 206h1v2h-1zM351 206h1v2h-1zM371 206h1v2h-1zM427 207h2v2h-2zM447 207h2v2h-2zM152 208h1v1h-1zM172 208h1v1h-1zM192 208h1v1h-1zM212 208h1v1h-1zM232 208h1v1h-1zM252 208h1v1h-1zM272 208h1v1h-1zM292 208h1v1h-1zM312 208h1v1h-1zM332 208h1v1h-1zM352 208h1v1h-1zM372 208h1v1h-1zM166 380h1v1h-1zM186 380h1v1h-1zM206 380h1v1h-1zM226 380h1v1h-1zM246 380h1v1h-1zM266 380h1v1h-1zM286 380h1v1h-1zM306 380h1v1h-1zM326 380h1v1h-1zM346 380h1v1h-1zM366 380h1v1h-1zM386 380h1v1h-1zM442 380h1v2h-1zM462 380h1v2h-1zM165 381h1v2h-1zM185 381h1v2h-1zM205 381h1v2h-1zM225 381h1v2h-1zM245 381h1v2h-1zM265 381h1v2h-1zM285 381h1v2h-1zM305 381h1v2h-1zM325 381h1v2h-1zM345 381h1v2h-1zM365 381h1v2h-1zM385 381h1v2h-1zM441 381h1v2h-1zM461 381h1v2h-1zM167 381h1v3h-1zM187 381h1v3h-1zM207 381h1v3h-1zM227 381h1v3h-1zM247 381h1v3h-1zM267 381h1v3h-1zM287 381h1v3h-1zM307 381h1v3h-1zM327 381h1v3h-1zM347 381h1v3h-1zM367 381h1v3h-1zM387 381h1v3h-1zM126 382h1v1h-1zM146 382h1v1h-1zM125 382h1v2h-1zM145 382h1v2h-1zM443 382h1v2h-1zM463 382h1v2h-1zM127 383h1v3h-1zM147 383h1v3h-1zM440 383h1v4h-1zM460 383h1v4h-1zM164 383h1v5h-1zM184 383h1v5h-1zM204 383h1v5h-1zM224 383h1v5h-1zM244 383h1v5h-1zM264 383h1v5h-1zM284 383h1v5h-1zM304 383h1v5h-1zM324 383h1v5h-1zM344 383h1v5h-1zM364 383h1v5h-1zM384 383h1v5h-1zM124 384h1v4h-1zM144 384h1v4h-1zM168 384h1v5h-1zM188 384h1v5h-1zM208 384h1v5h-1zM228 384h1v5h-1zM248 384h1v5h-1zM268 384h1v5h-1zM288 384h1v5h-1zM308 384h1v5h-1zM328 384h1v5h-1zM348 384h1v5h-1zM368 384h1v5h-1zM388 384h1v5h-1zM444 384h1v5h-1zM464 384h1v5h-1zM128 386h1v5h-1zM148 386h1v5h-1zM439 387h1v7h-1zM459 387h1v7h-1zM123 388h1v6h-1zM143 388h1v6h-1zM163 388h1v7h-1zM183 388h1v7h-1zM203 388h1v7h-1zM223 388h1v7h-1zM243 388h1v7h-1zM263 388h1v7h-1zM283 388h1v7h-1zM303 388h1v7h-1zM323 388h1v7h-1zM343 388h1v7h-1zM363 388h1v7h-1zM383 388h1v7h-1zM169 389h1v6h-1zM189 389h1v6h-1zM209 389h1v6h-1zM229 389h1v6h-1zM249 389h1v6h-1zM269 389h1v6h-1zM289 389h1v6h-1zM309 389h1v6h-1zM329 389h1v6h-1zM349 389h1v6h-1zM369 389h1v6h-1zM389 389h1v6h-1zM445 389h1v7h-1zM465 389h1v7h-1zM149 391h1v5h-1zM129 391h1v6h-1zM122 394h1v7h-1zM142 394h1v7h-1zM438 394h1v7h-1zM458 394h1v7h-1zM162 395h1v7h-1zM182 395h1v7h-1zM202 395h1v7h-1zM222 395h1v7h-1zM242 395h1v7h-1zM262 395h1v7h-1zM282 395h1v7h-1zM302 395h1v7h-1zM322 395h1v7h-1zM342 395h1v7h-1zM362 395h1v7h-1zM382 395h1v7h-1zM170 395h1v8h-1zM190 395h1v8h-1zM210 395h1v8h-1zM230 395h1v8h-1zM250 395h1v8h-1zM270 395h1v8h-1zM290 395h1v8h-1zM310 395h1v8h-1zM330 395h1v8h-1zM350 395h1v8h-1zM370 395h1v8h-1zM390 395h1v20h-1zM150 396h1v7h-1zM426 396h1v8h-1zM446 396h1v8h-1zM466 396h1v8h-1zM130 397h1v8h-1zM110 400h1v5h-1zM121 401h1v7h-1zM141 401h1v7h-1zM437 401h1v8h-1zM457 401h1v8h-1zM161 402h1v8h-1zM181 402h1v8h-1zM201 402h1v8h-1zM221 402h1v8h-1zM241 402h1v8h-1zM261 402h1v8h-1zM281 402h1v8h-1zM301 402h1v8h-1zM321 402h1v8h-1zM341 402h1v8h-1zM361 402h1v8h-1zM381 402h1v8h-1zM151 403h1v8h-1zM171 403h1v8h-1zM191 403h1v8h-1zM211 403h1v8h-1zM231 403h1v8h-1zM251 403h1v8h-1zM271 403h1v8h-1zM291 403h1v8h-1zM311 403h1v8h-1zM331 403h1v8h-1zM351 403h1v8h-1zM371 403h1v8h-1zM467 404h1v4h-1zM427 404h1v8h-1zM447 404h1v8h-1zM111 405h1v7h-1zM131 405h1v7h-1zM541 406h236v1h-236zM468 407h73v1h-73zM120 408h1v8h-1zM140 408h1v8h-1zM436 409h1v8h-1zM456 409h1v8h-1zM160 410h1v8h-1zM180 410h1v8h-1zM200 410h1v8h-1zM220 410h1v8h-1zM240 410h1v8h-1zM260 410h1v8h-1zM280 410h1v8h-1zM300 410h1v8h-1zM320 410h1v8h-1zM340 410h1v8h-1zM360 410h1v8h-1zM380 410h1v8h-1zM152 411h1v7h-1zM172 411h1v7h-1zM192 411h1v7h-1zM212 411h1v7h-1zM232 411h1v7h-1zM252 411h1v7h-1zM272 411h1v7h-1zM292 411h1v7h-1zM312 411h1v7h-1zM332 411h1v7h-1zM352 411h1v7h-1zM372 411h1v7h-1zM112 412h1v7h-1zM132 412h1v7h-1zM428 412h1v7h-1zM448 412h1v7h-1zM119 416h1v6h-1zM139 416h1v6h-1zM435 417h1v7h-1zM455 417h1v7h-1zM159 418h1v6h-1zM179 418h1v6h-1zM199 418h1v6h-1zM219 418h1v6h-1zM239 418h1v6h-1zM259 418h1v6h-1zM279 418h1v6h-1zM299 418h1v6h-1zM319 418h1v6h-1zM339 418h1v6h-1zM359 418h1v6h-1zM379 418h1v6h-1zM153 418h1v7h-1zM173 418h1v7h-1zM193 418h1v7h-1zM213 418h1v7h-1zM233 418h1v7h-1zM253 418h1v7h-1zM273 418h1v7h-1zM293 418h1v7h-1zM313 418h1v7h-1zM333 418h1v7h-1zM353 418h1v7h-1zM373 418h1v7h-1zM113 419h1v6h-1zM133 419h1v6h-1zM429 419h1v7h-1zM449 419h1v7h-1zM118 422h1v5h-1zM138 422h1v5h-1zM158 424h1v5h-1zM178 424h1v5h-1zM198 424h1v5h-1zM218 424h1v5h-1zM238 424h1v5h-1zM258 424h1v5h-1zM278 424h1v5h-1zM298 424h1v5h-1zM318 424h1v5h-1zM338 424h1v5h-1zM358 424h1v5h-1zM378 424h1v5h-1zM434 424h1v5h-1zM454 424h1v5h-1zM114 425h1v4h-1zM134 425h1v4h-1zM154 425h1v5h-1zM174 425h1v5h-1zM194 425h1v5h-1zM214 425h1v5h-1zM234 425h1v5h-1zM254 425h1v5h-1zM274 425h1v5h-1zM294 425h1v5h-1zM314 425h1v5h-1zM334 425h1v5h-1zM354 425h1v5h-1zM374 425h1v5h-1zM430 426h1v4h-1zM450 426h1v4h-1zM117 427h1v3h-1zM137 427h1v3h-1zM115 429h1v2h-1zM135 429h1v2h-1zM433 429h1v2h-1zM453 429h1v2h-1zM157 429h1v3h-1zM177 429h1v3h-1zM197 429h1v3h-1zM217 429h1v3h-1zM237 429h1v3h-1zM257 429h1v3h-1zM277 429h1v3h-1zM297 429h1v3h-1zM317 429h1v3h-1zM337 429h1v3h-1zM357 429h1v3h-1zM377 429h1v3h-1zM116 430h1v1h-1zM136 430h1v1h-1zM155 430h1v2h-1zM175 430h1v2h-1zM195 430h1v2h-1zM215 430h1v2h-1zM235 430h1v2h-1zM255 430h1v2h-1zM275 430h1v2h-1zM295 430h1v2h-1zM315 430h1v2h-1zM335 430h1v2h-1zM355 430h1v2h-1zM375 430h1v2h-1zM431 430h1v2h-1zM451 430h1v2h-1zM432 431h1v2h-1zM452 431h1v2h-1zM156 432h1v1h-1zM176 432h1v1h-1zM196 432h1v1h-1zM216 432h1v1h-1zM236 432h1v1h-1zM256 432h1v1h-1zM276 432h1v1h-1zM296 432h1v1h-1zM316 432h1v1h-1zM336 432h1v1h-1zM356 432h1v1h-1zM376 432h1v1h-1z"/>
<path fill="#ff0000" d="M167 212h1v1h-1zM187 212h1v1h-1zM207 212h1v1h-1zM227 212h1v1h-1zM247 212h1v1h-1zM267 212h1v1h-1zM287 212h1v1h-1zM307 212h1v1h-1zM327 212h1v1h-1zM347 212h1v1h-1zM367 212h1v1h-1zM387 212h1v1h-1zM442 212h2v2h-2zM462 212h2v2h-2zM166 213h1v2h-1zM186 213h1v2h-1zM206 213h1v2h-1zM226 213h1v2h-1zM246 213h1v2h-1zM266 213h1v2h-1zM286 213h1v2h-1zM306 213h1v2h-1zM326 213h1v2h-1zM346 213h1v2h-1zM366 213h1v2h-1zM386 213h1v2h-1zM168 213h1v3h-1zM188 213h1v3h-1zM208 213h1v3h-1zM228 213h1v3h-1zM248 213h1v3h-1zM268 213h1v3h-1zM288 213h1v3h-1zM308 213h1v3h-1zM328 213h1v3h-1zM348 213h1v3h-1zM368 213h1v3h-1zM388 213h1v3h-1zM444 214h1v3h-1zM464 214h1v3h-1zM441 214h1v4h-1zM461 214h1v4h-1zM165 215h1v5h-1zM185 215h1v5h-1zM205 215h1v5h-1zM225 215h1v5h-1zM245 215h1v5h-1zM265 215h1v5h-1zM285 215h1v5h-1zM305 215h1v5h-1zM325 215h1v5h-1zM345 215h1v5h-1zM365 215h1v5h-1zM385 215h1v5h-1zM169 216h1v5h-1zM189 216h1v5h-1zM209 216h1v5h-1zM229 216h1v5h-1zM249 216h1v5h-1zM269 216h1v5h-1zM289 216h1v5h-1zM309 216h1v5h-1zM329 216h1v5h-1zM349 216h1v5h-1zM369 216h1v5h-1zM389 216h1v5h-1zM128 217h1v1h-1zM148 217h1v1h-1zM710 217h1v1h-1zM730 217h1v1h-1zM129 217h1v2h-1zM482 217h2v2h-2zM502 217h2v2h-2zM522 217h2v2h-2zM542 217h2v2h-2zM562 217h2v2h-2zM582 217h2v2h-2zM602 217h2v2h-2zM622 217h2v2h-2zM642 217h2v2h-2zM662 217h2v2h-2zM682 217h2v2h-2zM702 217h2v2h-2zM149 217h1v4h-1zM445 217h1v6h-1zM465 217h1v6h-1zM711 218h1v2h-1zM731 218h1v2h-1zM127 218h1v3h-1zM147 218h1v3h-1zM709 218h1v3h-1zM729 218h1v3h-1zM440 218h1v6h-1zM460 218h1v6h-1zM110 219h1v3h-1zM130 219h1v3h-1zM481 219h1v3h-1zM484 219h1v3h-1zM501 219h1v3h-1zM504 219h1v3h-1zM521 219h1v3h-1zM524 219h1v3h-1zM541 219h1v3h-1zM544 219h1v3h-1zM561 219h1v3h-1zM564 219h1v3h-1zM581 219h1v3h-1zM584 219h1v3h-1zM601 219h1v3h-1zM604 219h1v3h-1zM621 219h1v3h-1zM624 219h1v3h-1zM641 219h1v3h-1zM644 219h1v3h-1zM661 219h1v3h-1zM664 219h1v3h-1zM681 219h1v3h-1zM684 219h1v3h-1zM701 219h1v3h-1zM704 219h1v3h-1zM749 219h1v10h-1zM712 220h1v3h-1zM732 220h1v3h-1zM164 220h1v7h-1zM184 220h1v7h-1zM204 220h1v7h-1zM224 220h1v7h-1zM244 220h1v7h-1zM264 220h1v7h-1zM284 220h1v7h-1zM304 220h1v7h-1zM324 220h1v7h-1zM344 220h1v7h-1zM364 220h1v7h-1zM384 220h1v7h-1zM728 221h1v4h-1zM748 221h1v4h-1zM126 221h1v5h-1zM146 221h1v5h-1zM150 221h1v6h-1zM170 221h1v6h-1zM190 221h1v6h-1zM210 221h1v6h-1zM230 221h1v6h-1zM250 221h1v6h-1zM270 221h1v6h-1zM290 221h1v6h-1zM310 221h1v6h-1zM330 221h1v6h-1zM350 221h1v6h-1zM370 221h1v6h-1zM708 221h1v7h-1zM390 221h1v22h-1zM111 222h1v4h-1zM131 222h1v4h-1zM485 222h1v4h-1zM505 222h1v4h-1zM525 222h1v4h-1zM545 222h1v4h-1zM565 222h1v4h-1zM585 222h1v4h-1zM605 222h1v4h-1zM625 222h1v4h-1zM645 222h1v4h-1zM665 222h1v4h-1zM685 222h1v4h-1zM705 222h1v4h-1zM480 222h1v5h-1zM500 222h1v5h-1zM520 222h1v5h-1zM540 222h1v5h-1zM560 222h1v5h-1zM580 222h1v5h-1zM600 222h1v5h-1zM620 222h1v5h-1zM640 222h1v5h-1zM660 222h1v5h-1zM680 222h1v5h-1zM700 222h1v5h-1zM713 223h1v5h-1zM733 223h1v5h-1zM426 223h1v7h-1zM446 223h1v7h-1zM466 223h1v7h-1zM439 224h1v7h-1zM459 224h1v7h-1zM727 225h1v5h-1zM747 225h1v5h-1zM112 226h1v6h-1zM125 226h1v6h-1zM132 226h1v6h-1zM145 226h1v6h-1zM486 226h1v6h-1zM506 226h1v6h-1zM526 226h1v6h-1zM546 226h1v6h-1zM566 226h1v6h-1zM586 226h1v6h-1zM606 226h1v6h-1zM626 226h1v6h-1zM646 226h1v6h-1zM666 226h1v6h-1zM686 226h1v6h-1zM706 226h1v6h-1zM479 227h1v5h-1zM499 227h1v5h-1zM519 227h1v5h-1zM539 227h1v5h-1zM559 227h1v5h-1zM579 227h1v5h-1zM599 227h1v5h-1zM619 227h1v5h-1zM639 227h1v5h-1zM659 227h1v5h-1zM679 227h1v5h-1zM699 227h1v5h-1zM163 227h1v7h-1zM183 227h1v7h-1zM203 227h1v7h-1zM223 227h1v7h-1zM243 227h1v7h-1zM263 227h1v7h-1zM283 227h1v7h-1zM303 227h1v7h-1zM323 227h1v7h-1zM343 227h1v7h-1zM363 227h1v7h-1zM383 227h1v7h-1zM151 227h1v8h-1zM171 227h1v8h-1zM191 227h1v8h-1zM211 227h1v8h-1zM231 227h1v8h-1zM251 227h1v8h-1zM271 227h1v8h-1zM291 227h1v8h-1zM311 227h1v8h-1zM331 227h1v8h-1zM351 227h1v8h-1zM371 227h1v8h-1zM714 228h1v6h-1zM734 228h1v6h-1zM707 228h1v7h-1zM750 229h1v10h-1zM726 230h1v7h-1zM746 230h1v7h-1zM427 230h1v8h-1zM447 230h1v8h-1zM467 230h1v8h-1zM438 231h1v8h-1zM458 231h1v8h-1zM124 232h1v6h-1zM144 232h1v6h-1zM487 232h1v6h-1zM507 232h1v6h-1zM527 232h1v6h-1zM547 232h1v6h-1zM567 232h1v6h-1zM587 232h1v6h-1zM607 232h1v6h-1zM627 232h1v6h-1zM647 232h1v6h-1zM667 232h1v6h-1zM687 232h1v6h-1zM113 232h1v7h-1zM133 232h1v7h-1zM478 232h1v7h-1zM498 232h1v7h-1zM518 232h1v7h-1zM538 232h1v7h-1zM558 232h1v7h-1zM578 232h1v7h-1zM598 232h1v7h-1zM618 232h1v7h-1zM638 232h1v7h-1zM658 232h1v7h-1zM678 232h1v7h-1zM698 232h1v7h-1zM715 234h1v6h-1zM735 234h1v6h-1zM162 234h1v8h-1zM182 234h1v8h-1zM202 234h1v8h-1zM222 234h1v8h-1zM242 234h1v8h-1zM262 234h1v8h-1zM282 234h1v8h-1zM302 234h1v8h-1zM322 234h1v8h-1zM342 234h1v8h-1zM362 234h1v8h-1zM382 234h1v8h-1zM152 235h1v8h-1zM172 235h1v8h-1zM192 235h1v8h-1zM212 235h1v8h-1zM232 235h1v8h-1zM252 235h1v8h-1zM272 235h1v8h-1zM292 235h1v8h-1zM312 235h1v8h-1zM332 235h1v8h-1zM352 235h1v8h-1zM372 235h1v8h-1zM725 237h1v6h-1zM745 237h1v6h-1zM751 238h26v1h-26zM123 238h1v7h-1zM143 238h1v7h-1zM468 238h1v7h-1zM488 238h1v7h-1zM508 238h1v7h-1zM528 238h1v7h-1zM548 238h1v7h-1zM568 238h1v7h-1zM588 238h1v7h-1zM608 238h1v7h-1zM628 238h1v7h-1zM648 238h1v7h-1zM668 238h1v7h-1zM688 238h1v7h-1zM428 238h1v8h-1zM448 238h1v8h-1zM114 239h1v6h-1zM134 239h1v6h-1zM477 239h1v6h-1zM497 239h1v6h-1zM517 239h1v6h-1zM537 239h1v6h-1zM557 239h1v6h-1zM577 239h1v6h-1zM597 239h1v6h-1zM617 239h1v6h-1zM637 239h1v6h-1zM657 239h1v6h-1zM677 239h1v6h-1zM697 239h1v6h-1zM437 239h1v8h-1zM457 239h1v8h-1zM716 240h1v7h-1zM736 240h1v7h-1zM161 242h1v8h-1zM181 242h1v8h-1zM201 242h1v8h-1zM221 242h1v8h-1zM241 242h1v8h-1zM261 242h1v8h-1zM281 242h1v8h-1zM301 242h1v8h-1zM321 242h1v8h-1zM341 242h1v8h-1zM361 242h1v8h-1zM381 242h1v8h-1zM724 243h1v6h-1zM744 243h1v6h-1zM153 243h1v7h-1zM173 243h1v7h-1zM193 243h1v7h-1zM213 243h1v7h-1zM233 243h1v7h-1zM253 243h1v7h-1zM273 243h1v7h-1zM293 243h1v7h-1zM313 243h1v7h-1zM333 243h1v7h-1zM353 243h1v7h-1zM373 243h1v7h-1zM469 245h1v5h-1zM489 245h1v5h-1zM509 245h1v5h-1zM529 245h1v5h-1zM549 245h1v5h-1zM569 245h1v5h-1zM589 245h1v5h-1zM609 245h1v5h-1zM629 245h1v5h-1zM649 245h1v5h-1zM669 245h1v5h-1zM689 245h1v5h-1zM115 245h1v6h-1zM122 245h1v6h-1zM135 245h1v6h-1zM142 245h1v6h-1zM476 245h1v6h-1zM496 245h1v6h-1zM516 245h1v6h-1zM536 245h1v6h-1zM556 245h1v6h-1zM576 245h1v6h-1zM596 245h1v6h-1zM616 245h1v6h-1zM636 245h1v6h-1zM656 245h1v6h-1zM676 245h1v6h-1zM696 245h1v6h-1zM429 246h1v7h-1zM449 246h1v7h-1zM717 247h1v5h-1zM737 247h1v5h-1zM436 247h1v7h-1zM456 247h1v7h-1zM723 249h1v5h-1zM743 249h1v5h-1zM470 250h1v5h-1zM490 250h1v5h-1zM510 250h1v5h-1zM530 250h1v5h-1zM550 250h1v5h-1zM570 250h1v5h-1zM590 250h1v5h-1zM610 250h1v5h-1zM630 250h1v5h-1zM650 250h1v5h-1zM670 250h1v5h-1zM690 250h1v5h-1zM160 250h1v6h-1zM180 250h1v6h-1zM200 250h1v6h-1zM220 250h1v6h-1zM240 250h1v6h-1zM260 250h1v6h-1zM280 250h1v6h-1zM300 250h1v6h-1zM320 250h1v6h-1zM340 250h1v6h-1zM360 250h1v6h-1zM380 250h1v6h-1zM154 250h1v7h-1zM174 250h1v7h-1zM194 250h1v7h-1zM214 250h1v7h-1zM234 250h1v7h-1zM254 250h1v7h-1zM274 250h1v7h-1zM294 250h1v7h-1zM314 250h1v7h-1zM334 250h1v7h-1zM354 250h1v7h-1zM374 250h1v7h-1zM121 251h1v4h-1zM141 251h1v4h-1zM475 251h1v4h-1zM495 251h1v4h-1zM515 251h1v4h-1zM535 251h1v4h-1zM555 251h1v4h-1zM575 251h1v4h-1zM595 251h1v4h-1zM615 251h1v4h-1zM635 251h1v4h-1zM655 251h1v4h-1zM675 251h1v4h-1zM695 251h1v4h-1zM116 251h1v5h-1zM136 251h1v5h-1zM718 252h1v4h-1zM738 252h1v4h-1zM430 253h1v6h-1zM450 253h1v6h-1zM722 254h1v3h-1zM742 254h1v3h-1zM435 254h1v6h-1zM455 254h1v6h-1zM120 255h1v3h-1zM140 255h1v3h-1zM471 255h1v3h-1zM474 255h1v3h-1zM491 255h1v3h-1zM494 255h1v3h-1zM511 255h1v3h-1zM514 255h1v3h-1zM531 255h1v3h-1zM534 255h1v3h-1zM551 255h1v3h-1zM554 255h1v3h-1zM571 255h1v3h-1zM574 255h1v3h-1zM591 255h1v3h-1zM594 255h1v3h-1zM611 255h1v3h-1zM614 255h1v3h-1zM631 255h1v3h-1zM634 255h1v3h-1zM651 255h1v3h-1zM654 255h1v3h-1zM671 255h1v3h-1zM674 255h1v3h-1zM691 255h1v3h-1zM694 255h1v3h-1zM117 256h1v3h-1zM137 256h1v3h-1zM719 256h1v3h-1zM739 256h1v3h-1zM159 256h1v5h-1zM179 256h1v5h-1zM199 256h1v5h-1zM219 256h1v5h-1zM239 256h1v5h-1zM259 256h1v5h-1zM279 256h1v5h-1zM299 256h1v5h-1zM319 256h1v5h-1zM339 256h1v5h-1zM359 256h1v5h-1zM379 256h1v5h-1zM721 257h1v2h-1zM741 257h1v2h-1zM155 257h1v5h-1zM175 257h1v5h-1zM195 257h1v5h-1zM215 257h1v5h-1zM235 257h1v5h-1zM255 257h1v5h-1zM275 257h1v5h-1zM295 257h1v5h-1zM315 257h1v5h-1zM335 257h1v5h-1zM355 257h1v5h-1zM375 257h1v5h-1zM119 258h1v2h-1zM139 258h1v2h-1zM472 258h2v2h-2zM492 258h2v2h-2zM512 258h2v2h-2zM532 258h2v2h-2zM552 258h2v2h-2zM572 258h2v2h-2zM592 258h2v2h-2zM612 258h2v2h-2zM632 258h2v2h-2zM652 258h2v2h-2zM672 258h2v2h-2zM692 258h2v2h-2zM118 259h1v1h-1zM138 259h1v1h-1zM720 259h1v1h-1zM740 259h1v1h-1zM431 259h1v4h-1zM451 259h1v4h-1zM434 260h1v3h-1zM454 260h1v3h-1zM158 261h1v3h-1zM178 261h1v3h-1zM198 261h1v3h-1zM218 261h1v3h-1zM238 261h1v3h-1zM258 261h1v3h-1zM278 261h1v3h-1zM298 261h1v3h-1zM318 261h1v3h-1zM338 261h1v3h-1zM358 261h1v3h-1zM378 261h1v3h-1zM156 262h1v2h-1zM176 262h1v2h-1zM196 262h1v2h-1zM216 262h1v2h-1zM236 262h1v2h-1zM256 262h1v2h-1zM276 262h1v2h-1zM296 262h1v2h-1zM316 262h1v2h-1zM336 262h1v2h-1zM356 262h1v2h-1zM376 262h1v2h-1zM432 263h2v2h-2zM452 263h2v2h-2zM157 264h1v1h-1zM177 264h1v1h-1zM197 264h1v1h-1zM217 264h1v1h-1zM237 264h1v1h-1zM257 264h1v1h-1zM277 264h1v1h-1zM297 264h1v1h-1zM317 264h1v1h-1zM337 264h1v1h-1zM357 264h1v1h-1zM377 264h1v1h-1zM152 436h1v1h-1zM172 436h1v1h-1zM192 436h1v1h-1zM212 436h1v1h-1zM232 436h1v1h-1zM252 436h1v1h-1zM272 436h1v1h-1zM292 436h1v1h-1zM312 436h1v1h-1zM332 436h1v1h-1zM352 436h1v1h-1zM372 436h1v1h-1zM153 436h1v2h-1zM173 436h1v2h-1zM193 436h1v2h-1zM213 436h1v2h-1zM233 436h1v2h-1zM253 436h1v2h-1zM273 436h1v2h-1zM293 436h1v2h-1zM313 436h1v2h-1zM333 436h1v2h-1zM353 436h1v2h-1zM373 436h1v2h-1zM428 436h2v2h-2zM448 436h2v2h-2zM151 437h1v4h-1zM171 437h1v4h-1zM191 437h1v4h-1zM211 437h1v4h-1zM231 437h1v4h-1zM251 437h1v4h-1zM271 437h1v4h-1zM291 437h1v4h-1zM311 437h1v4h-1zM331 437h1v4h-1zM351 437h1v4h-1zM371 437h1v4h-1zM112 438h1v1h-1zM132 438h1v1h-1zM113 438h1v2h-1zM133 438h1v2h-1zM430 438h1v3h-1zM450 438h1v3h-1zM154 438h1v4h-1zM174 438h1v4h-1zM194 438h1v4h-1zM214 438h1v4h-1zM234 438h1v4h-1zM254 438h1v4h-1zM274 438h1v4h-1zM294 438h1v4h-1zM314 438h1v4h-1zM334 438h1v4h-1zM354 438h1v4h-1zM374 438h1v4h-1zM427 438h1v4h-1zM447 438h1v4h-1zM111 439h1v4h-1zM131 439h1v4h-1zM114 440h1v3h-1zM134 440h1v3h-1zM170 441h1v5h-1zM190 441h1v5h-1zM210 441h1v5h-1zM230 441h1v5h-1zM250 441h1v5h-1zM270 441h1v5h-1zM290 441h1v5h-1zM310 441h1v5h-1zM330 441h1v5h-1zM350 441h1v5h-1zM370 441h1v5h-1zM150 441h1v6h-1zM431 441h1v6h-1zM451 441h1v6h-1zM155 442h1v6h-1zM175 442h1v6h-1zM195 442h1v6h-1zM215 442h1v6h-1zM235 442h1v6h-1zM255 442h1v6h-1zM275 442h1v6h-1zM295 442h1v6h-1zM315 442h1v6h-1zM335 442h1v6h-1zM355 442h1v6h-1zM375 442h1v6h-1zM426 442h1v6h-1zM446 442h1v6h-1zM110 443h1v3h-1zM390 443h1v3h-1zM130 443h1v5h-1zM115 443h1v6h-1zM135 443h1v6h-1zM466 444h1v10h-1zM169 446h1v7h-1zM189 446h1v7h-1zM209 446h1v7h-1zM229 446h1v7h-1zM249 446h1v7h-1zM269 446h1v7h-1zM289 446h1v7h-1zM309 446h1v7h-1zM329 446h1v7h-1zM349 446h1v7h-1zM369 446h1v7h-1zM389 446h1v7h-1zM432 447h1v7h-1zM452 447h1v7h-1zM149 447h1v8h-1zM129 448h1v7h-1zM445 448h1v7h-1zM465 448h1v7h-1zM156 448h1v8h-1zM176 448h1v8h-1zM196 448h1v8h-1zM216 448h1v8h-1zM236 448h1v8h-1zM256 448h1v8h-1zM276 448h1v8h-1zM296 448h1v8h-1zM316 448h1v8h-1zM336 448h1v8h-1zM356 448h1v8h-1zM376 448h1v8h-1zM116 449h1v6h-1zM136 449h1v6h-1zM168 453h1v8h-1zM188 453h1v8h-1zM208 453h1v8h-1zM228 453h1v8h-1zM248 453h1v8h-1zM268 453h1v8h-1zM288 453h1v8h-1zM308 453h1v8h-1zM328 453h1v8h-1zM348 453h1v8h-1zM368 453h1v8h-1zM388 453h1v8h-1zM433 454h1v8h-1zM453 454h1v8h-1zM467 454h1v10h-1zM128 455h1v7h-1zM148 455h1v7h-1zM117 455h1v8h-1zM137 455h1v8h-1zM444 455h1v8h-1zM464 455h1v8h-1zM157 456h1v8h-1zM177 456h1v8h-1zM197 456h1v8h-1zM217 456h1v8h-1zM237 456h1v8h-1zM257 456h1v8h-1zM277 456h1v8h-1zM297 456h1v8h-1zM317 456h1v8h-1zM337 456h1v8h-1zM357 456h1v8h-1zM377 456h1v8h-1zM167 461h1v8h-1zM187 461h1v8h-1zM207 461h1v8h-1zM227 461h1v8h-1zM247 461h1v8h-1zM267 461h1v8h-1zM287 461h1v8h-1zM307 461h1v8h-1zM327 461h1v8h-1zM347 461h1v8h-1zM367 461h1v8h-1zM387 461h1v8h-1zM495 462h282v1h-282zM127 462h1v8h-1zM147 462h1v8h-1zM434 462h1v8h-1zM454 462h1v8h-1zM468 463h27v1h-27zM118 463h1v7h-1zM138 463h1v7h-1zM443 463h1v8h-1zM463 463h1v8h-1zM158 464h1v8h-1zM178 464h1v8h-1zM198 464h1v8h-1zM218 464h1v8h-1zM238 464h1v8h-1zM258 464h1v8h-1zM278 464h1v8h-1zM298 464h1v8h-1zM318 464h1v8h-1zM338 464h1v8h-1zM358 464h1v8h-1zM378 464h1v8h-1zM166 469h1v8h-1zM186 469h1v8h-1zM206 469h1v8h-1zM226 469h1v8h-1zM246 469h1v8h-1zM266 469h1v8h-1zM286 469h1v8h-1zM306 469h1v8h-1zM326 469h1v8h-1zM346 469h1v8h-1zM366 469h1v8h-1zM386 469h1v8h-1zM126 470h1v6h-1zM146 470h1v6h-1zM119 470h1v7h-1zM139 470h1v7h-1zM435 470h1v7h-1zM455 470h1v7h-1zM442 471h1v7h-1zM462 471h1v7h-1zM159 472h1v7h-1zM179 472h1v7h-1zM199 472h1v7h-1zM219 472h1v7h-1zM239 472h1v7h-1zM259 472h1v7h-1zM279 472h1v7h-1zM299 472h1v7h-1zM319 472h1v7h-1zM339 472h1v7h-1zM359 472h1v7h-1zM379 472h1v7h-1zM125 476h1v6h-1zM145 476h1v6h-1zM120 477h1v5h-1zM140 477h1v5h-1zM165 477h1v6h-1zM185 477h1v6h-1zM205 477h1v6h-1zM225 477h1v6h-1zM245 477h1v6h-1zM265 477h1v6h-1zM285 477h1v6h-1zM305 477h1v6h-1zM325 477h1v6h-1zM345 477h1v6h-1zM365 477h1v6h-1zM385 477h1v6h-1zM436 477h1v6h-1zM456 477h1v6h-1zM441 478h1v6h-1zM461 478h1v6h-1zM160 479h1v5h-1zM180 479h1v5h-1zM200 479h1v5h-1zM220 479h1v5h-1zM240 479h1v5h-1zM260 479h1v5h-1zM280 479h1v5h-1zM300 479h1v5h-1zM320 479h1v5h-1zM340 479h1v5h-1zM360 479h1v5h-1zM380 479h1v5h-1zM124 482h1v3h-1zM144 482h1v3h-1zM121 482h1v4h-1zM141 482h1v4h-1zM164 483h1v4h-1zM184 483h1v4h-1zM204 483h1v4h-1zM224 483h1v4h-1zM244 483h1v4h-1zM264 483h1v4h-1zM284 483h1v4h-1zM304 483h1v4h-1zM324 483h1v4h-1zM344 483h1v4h-1zM364 483h1v4h-1zM384 483h1v4h-1zM437 483h1v4h-1zM457 483h1v4h-1zM440 484h1v3h-1zM460 484h1v3h-1zM161 484h1v4h-1zM181 484h1v4h-1zM201 484h1v4h-1zM221 484h1v4h-1zM241 484h1v4h-1zM261 484h1v4h-1zM281 484h1v4h-1zM301 484h1v4h-1zM321 484h1v4h-1zM341 484h1v4h-1zM361 484h1v4h-1zM381 484h1v4h-1zM123 485h1v2h-1zM143 485h1v2h-1zM122 486h1v1h-1zM142 486h1v1h-1zM163 487h1v2h-1zM183 487h1v2h-1zM203 487h1v2h-1zM223 487h1v2h-1zM243 487h1v2h-1zM263 487h1v2h-1zM283 487h1v2h-1zM303 487h1v2h-1zM323 487h1v2h-1zM343 487h1v2h-1zM363 487h1v2h-1zM383 487h1v2h-1zM438 487h2v2h-2zM458 487h2v2h-2zM162 488h1v1h-1zM182 488h1v1h-1zM202 488h1v1h-1zM222 488h1v1h-1zM242 488h1v1h-1zM262 488h1v1h-1zM282 488h1v1h-1zM302 488h1v1h-1zM322 488h1v1h-1zM342 488h1v1h-1zM362 488h1v1h-1zM382 488h1v1h-1z"/>
<path fill="#00ffff" d="M163 269h3v1h-3zM183 269h3v1h-3zM203 269h3v1h-3zM223 269h3v1h-3zM243 269h3v1h-3zM263 269h3v1h-3zM283 269h3v1h-3zM303 269h3v1h-3zM323 269h3v1h-3zM343 269h3v1h-3zM363 269h3v1h-3zM383 269h3v1h-3zM439 269h2v1h-2zM459 269h2v1h-2zM166 269h1v2h-1zM186 269h1v2h-1zM206 269h1v2h-1zM226 269h1v2h-1zM246 269h1v2h-1zM266 269h1v2h-1zM286 269h1v2h-1zM306 269h1v2h-1zM326 269h1v2h-1zM346 269h1v2h-1zM366 269h1v2h-1zM386 269h1v2h-1zM438 269h1v2h-1zM441 269h1v2h-1zM458 269h1v2h-1zM461 269h1v2h-1zM162 270h1v5h-1zM182 270h1v5h-1zM202 270h1v5h-1zM222 270h1v5h-1zM242 270h1v5h-1zM262 270h1v5h-1zM282 270h1v5h-1zM302 270h1v5h-1zM322 270h1v5h-1zM342 270h1v5h-1zM362 270h1v5h-1zM382 270h1v5h-1zM167 271h1v4h-1zM187 271h1v4h-1zM207 271h1v4h-1zM227 271h1v4h-1zM247 271h1v4h-1zM267 271h1v4h-1zM287 271h1v4h-1zM307 271h1v4h-1zM327 271h1v4h-1zM347 271h1v4h-1zM367 271h1v4h-1zM387 271h1v4h-1zM442 271h1v4h-1zM462 271h1v4h-1zM437 271h1v5h-1zM457 271h1v5h-1zM725 273h1v1h-1zM745 273h1v1h-1zM477 273h2v2h-2zM497 273h2v2h-2zM517 273h2v2h-2zM537 273h2v2h-2zM557 273h2v2h-2zM577 273h2v2h-2zM597 273h2v2h-2zM617 273h2v2h-2zM637 273h2v2h-2zM657 273h2v2h-2zM677 273h2v2h-2zM697 273h2v2h-2zM726 273h1v2h-1zM746 273h1v2h-1zM724 274h1v3h-1zM744 274h1v3h-1zM476 275h1v3h-1zM479 275h1v3h-1zM496 275h1v3h-1zM499 275h1v3h-1zM516 275h1v3h-1zM519 275h1v3h-1zM536 275h1v3h-1zM539 275h1v3h-1zM556 275h1v3h-1zM559 275h1v3h-1zM576 275h1v3h-1zM579 275h1v3h-1zM596 275h1v3h-1zM599 275h1v3h-1zM616 275h1v3h-1zM619 275h1v3h-1zM636 275h1v3h-1zM639 275h1v3h-1zM656 275h1v3h-1zM659 275h1v3h-1zM676 275h1v3h-1zM679 275h1v3h-1zM696 275h1v3h-1zM699 275h1v3h-1zM727 275h1v4h-1zM747 275h1v4h-1zM161 275h1v8h-1zM181 275h1v8h-1zM201 275h1v8h-1zM221 275h1v8h-1zM241 275h1v8h-1zM261 275h1v8h-1zM281 275h1v8h-1zM301 275h1v8h-1zM321 275h1v8h-1zM341 275h1v8h-1zM361 275h1v8h-1zM381 275h1v8h-1zM443 275h1v8h-1zM463 275h1v8h-1zM168 275h1v9h-1zM188 275h1v9h-1zM208 275h1v9h-1zM228 275h1v9h-1zM248 275h1v9h-1zM268 275h1v9h-1zM288 275h1v9h-1zM308 275h1v9h-1zM328 275h1v9h-1zM348 275h1v9h-1zM368 275h1v9h-1zM388 275h1v9h-1zM436 276h1v8h-1zM456 276h1v8h-1zM723 277h1v5h-1zM743 277h1v5h-1zM480 278h1v4h-1zM500 278h1v4h-1zM520 278h1v4h-1zM540 278h1v4h-1zM560 278h1v4h-1zM580 278h1v4h-1zM600 278h1v4h-1zM620 278h1v4h-1zM640 278h1v4h-1zM660 278h1v4h-1zM680 278h1v4h-1zM700 278h1v4h-1zM475 278h1v5h-1zM495 278h1v5h-1zM515 278h1v5h-1zM535 278h1v5h-1zM555 278h1v5h-1zM575 278h1v5h-1zM595 278h1v5h-1zM615 278h1v5h-1zM635 278h1v5h-1zM655 278h1v5h-1zM675 278h1v5h-1zM695 278h1v5h-1zM728 279h1v4h-1zM748 279h1v4h-1zM708 280h1v18h-1zM722 282h1v5h-1zM742 282h1v5h-1zM481 282h1v6h-1zM501 282h1v6h-1zM521 282h1v6h-1zM541 282h1v6h-1zM561 282h1v6h-1zM581 282h1v6h-1zM601 282h1v6h-1zM621 282h1v6h-1zM641 282h1v6h-1zM661 282h1v6h-1zM681 282h1v6h-1zM701 282h1v6h-1zM474 283h1v5h-1zM494 283h1v5h-1zM514 283h1v5h-1zM534 283h1v5h-1zM554 283h1v5h-1zM574 283h1v5h-1zM594 283h1v5h-1zM614 283h1v5h-1zM634 283h1v5h-1zM654 283h1v5h-1zM674 283h1v5h-1zM694 283h1v5h-1zM709 283h1v6h-1zM729 283h1v6h-1zM749 283h1v7h-1zM160 283h1v11h-1zM180 283h1v11h-1zM200 283h1v11h-1zM220 283h1v11h-1zM240 283h1v11h-1zM260 283h1v11h-1zM280 283h1v11h-1zM300 283h1v11h-1zM320 283h1v11h-1zM340 283h1v11h-1zM360 283h1v11h-1zM380 283h1v11h-1zM444 283h1v11h-1zM464 283h1v11h-1zM169 284h1v11h-1zM189 284h1v11h-1zM209 284h1v11h-1zM229 284h1v11h-1zM249 284h1v11h-1zM269 284h1v11h-1zM289 284h1v11h-1zM309 284h1v11h-1zM329 284h1v11h-1zM349 284h1v11h-1zM369 284h1v11h-1zM389 284h1v11h-1zM435 284h1v11h-1zM455 284h1v11h-1zM721 287h1v7h-1zM741 287h1v7h-1zM482 288h1v6h-1zM502 288h1v6h-1zM522 288h1v6h-1zM542 288h1v6h-1zM562 288h1v6h-1zM582 288h1v6h-1zM602 288h1v6h-1zM622 288h1v6h-1zM642 288h1v6h-1zM662 288h1v6h-1zM682 288h1v6h-1zM702 288h1v6h-1zM473 288h1v7h-1zM493 288h1v7h-1zM513 288h1v7h-1zM533 288h1v7h-1zM553 288h1v7h-1zM573 288h1v7h-1zM593 288h1v7h-1zM613 288h1v7h-1zM633 288h1v7h-1zM653 288h1v7h-1zM673 288h1v7h-1zM693 288h1v7h-1zM710 289h1v6h-1zM730 289h1v6h-1zM750 290h1v5h-1zM110 294h39v1h-39zM751 294h26v1h-26zM149 294h1v4h-1zM720 294h1v6h-1zM740 294h1v6h-1zM483 294h1v7h-1zM503 294h1v7h-1zM523 294h1v7h-1zM543 294h1v7h-1zM563 294h1v7h-1zM583 294h1v7h-1zM603 294h1v7h-1zM623 294h1v7h-1zM643 294h1v7h-1zM663 294h1v7h-1zM683 294h1v7h-1zM703 294h1v7h-1zM159 294h1v11h-1zM179 294h1v11h-1zM199 294h1v11h-1zM219 294h1v11h-1zM239 294h1v11h-1zM259 294h1v11h-1zM279 294h1v11h-1zM299 294h1v11h-1zM319 294h1v11h-1zM339 294h1v11h-1zM359 294h1v11h-1zM379 294h1v11h-1zM445 294h1v11h-1zM465 294h1v11h-1zM472 295h1v6h-1zM492 295h1v6h-1zM512 295h1v6h-1zM532 295h1v6h-1zM552 295h1v6h-1zM572 295h1v6h-1zM592 295h1v6h-1zM612 295h1v6h-1zM632 295h1v6h-1zM652 295h1v6h-1zM672 295h1v6h-1zM692 295h1v6h-1zM711 295h1v7h-1zM731 295h1v7h-1zM170 295h1v11h-1zM190 295h1v11h-1zM210 295h1v11h-1zM230 295h1v11h-1zM250 295h1v11h-1zM270 295h1v11h-1zM290 295h1v11h-1zM310 295h1v11h-1zM330 295h1v11h-1zM350 295h1v11h-1zM370 295h1v11h-1zM434 295h1v11h-1zM454 295h1v11h-1zM390 295h1v15h-1zM150 298h1v8h-1zM707 298h1v18h-1zM719 300h1v6h-1zM739 300h1v6h-1zM484 301h1v5h-1zM504 301h1v5h-1zM524 301h1v5h-1zM544 301h1v5h-1zM564 301h1v5h-1zM584 301h1v5h-1zM604 301h1v5h-1zM624 301h1v5h-1zM644 301h1v5h-1zM664 301h1v5h-1zM684 301h1v5h-1zM704 301h1v5h-1zM471 301h1v6h-1zM491 301h1v6h-1zM511 301h1v6h-1zM531 301h1v6h-1zM551 301h1v6h-1zM571 301h1v6h-1zM591 301h1v6h-1zM611 301h1v6h-1zM631 301h1v6h-1zM651 301h1v6h-1zM671 301h1v6h-1zM691 301h1v6h-1zM712 302h1v5h-1zM732 302h1v5h-1zM426 305h1v8h-1zM446 305h1v8h-1zM466 305h1v8h-1zM158 305h1v9h-1zM178 305h1v9h-1zM198 305h1v9h-1zM218 305h1v9h-1zM238 305h1v9h-1zM258 305h1v9h-1zM278 305h1v9h-1zM298 305h1v9h-1zM318 305h1v9h-1zM338 305h1v9h-1zM358 305h1v9h-1zM378 305h1v9h-1zM718 306h1v4h-1zM738 306h1v4h-1zM485 306h1v5h-1zM505 306h1v5h-1zM525 306h1v5h-1zM545 306h1v5h-1zM565 306h1v5h-1zM585 306h1v5h-1zM605 306h1v5h-1zM625 306h1v5h-1zM645 306h1v5h-1zM665 306h1v5h-1zM685 306h1v5h-1zM705 306h1v5h-1zM151 306h1v8h-1zM171 306h1v8h-1zM191 306h1v8h-1zM211 306h1v8h-1zM231 306h1v8h-1zM251 306h1v8h-1zM271 306h1v8h-1zM291 306h1v8h-1zM311 306h1v8h-1zM331 306h1v8h-1zM351 306h1v8h-1zM371 306h1v8h-1zM433 306h1v8h-1zM453 306h1v8h-1zM470 307h1v4h-1zM490 307h1v4h-1zM510 307h1v4h-1zM530 307h1v4h-1zM550 307h1v4h-1zM570 307h1v4h-1zM590 307h1v4h-1zM610 307h1v4h-1zM630 307h1v4h-1zM650 307h1v4h-1zM670 307h1v4h-1zM690 307h1v4h-1zM713 307h1v5h-1zM733 307h1v5h-1zM717 310h1v4h-1zM737 310h1v4h-1zM469 311h1v3h-1zM486 311h1v3h-1zM489 311h1v3h-1zM506 311h1v3h-1zM509 311h1v3h-1zM526 311h1v3h-1zM529 311h1v3h-1zM546 311h1v3h-1zM549 311h1v3h-1zM566 311h1v3h-1zM569 311h1v3h-1zM586 311h1v3h-1zM589 311h1v3h-1zM606 311h1v3h-1zM609 311h1v3h-1zM626 311h1v3h-1zM629 311h1v3h-1zM646 311h1v3h-1zM649 311h1v3h-1zM666 311h1v3h-1zM669 311h1v3h-1zM686 311h1v3h-1zM689 311h1v3h-1zM706 311h1v3h-1zM714 312h1v3h-1zM734 312h1v3h-1zM467 313h1v3h-1zM427 313h1v5h-1zM447 313h1v5h-1zM468 314h1v2h-1zM487 314h2v2h-2zM507 314h2v2h-2zM527 314h2v2h-2zM547 314h2v2h-2zM567 314h2v2h-2zM587 314h2v2h-2zM607 314h2v2h-2zM627 314h2v2h-2zM647 314h2v2h-2zM667 314h2v2h-2zM687 314h2v2h-2zM716 314h1v2h-1zM736 314h1v2h-1zM157 314h1v4h-1zM177 314h1v4h-1zM197 314h1v4h-1zM217 314h1v4h-1zM237 314h1v4h-1zM257 314h1v4h-1zM277 314h1v4h-1zM297 314h1v4h-1zM317 314h1v4h-1zM337 314h1v4h-1zM357 314h1v4h-1zM377 314h1v4h-1zM432 314h1v4h-1zM452 314h1v4h-1zM152 314h1v5h-1zM172 314h1v5h-1zM192 314h1v5h-1zM212 314h1v5h-1zM232 314h1v5h-1zM252 314h1v5h-1zM272 314h1v5h-1zM292 314h1v5h-1zM312 314h1v5h-1zM332 314h1v5h-1zM352 314h1v5h-1zM372 314h1v5h-1zM715 315h1v1h-1zM735 315h1v1h-1zM156 318h1v2h-1zM176 318h1v2h-1zM196 318h1v2h-1zM216 318h1v2h-1zM236 318h1v2h-1zM256 318h1v2h-1zM276 318h1v2h-1zM296 318h1v2h-1zM316 318h1v2h-1zM336 318h1v2h-1zM356 318h1v2h-1zM376 318h1v2h-1zM428 318h1v2h-1zM431 318h1v2h-1zM448 318h1v2h-1zM451 318h1v2h-1zM153 319h3v1h-3zM173 319h3v1h-3zM193 319h3v1h-3zM213 319h3v1h-3zM233 319h3v1h-3zM253 319h3v1h-3zM273 319h3v1h-3zM293 319h3v1h-3zM313 319h3v1h-3zM333 319h3v1h-3zM353 319h3v1h-3zM373 319h3v1h-3zM429 319h2v1h-2zM449 319h2v1h-2zM159 493h1v1h-1zM160 493h1v2h-1zM158 494h1v2h-1zM179 495h2v1h-2zM161 495h1v2h-1zM178 496h1v1h-1zM199 496h1v1h-1zM181 496h1v2h-1zM200 496h1v2h-1zM157 496h1v3h-1zM198 497h1v1h-1zM219 497h1v1h-1zM220 497h1v2h-1zM162 497h1v3h-1zM177 497h1v3h-1zM218 498h1v1h-1zM239 498h1v1h-1zM201 498h1v2h-1zM240 498h1v2h-1zM182 498h1v3h-1zM197 498h1v3h-1zM259 499h1v1h-1zM221 499h1v2h-1zM238 499h1v2h-1zM260 499h1v2h-1zM156 499h1v3h-1zM217 499h1v3h-1zM258 500h1v1h-1zM279 500h2v1h-2zM241 500h1v2h-1zM176 500h1v3h-1zM202 500h1v3h-1zM163 500h1v4h-1zM278 501h1v1h-1zM299 501h2v1h-2zM319 501h1v1h-1zM261 501h1v2h-1zM281 501h1v2h-1zM320 501h1v2h-1zM222 501h1v3h-1zM237 501h1v3h-1zM257 501h1v3h-1zM183 501h1v4h-1zM196 501h1v4h-1zM298 502h1v1h-1zM339 502h2v1h-2zM359 502h1v1h-1zM301 502h1v2h-1zM318 502h1v2h-1zM360 502h1v2h-1zM242 502h1v3h-1zM277 502h1v3h-1zM155 502h1v4h-1zM216 502h1v4h-1zM338 503h1v1h-1zM379 503h2v1h-2zM321 503h1v2h-1zM341 503h1v2h-1zM358 503h1v2h-1zM262 503h1v3h-1zM297 503h1v3h-1zM175 503h1v4h-1zM203 503h1v4h-1zM282 503h1v4h-1zM378 504h1v1h-1zM361 504h1v2h-1zM381 504h1v2h-1zM236 504h1v3h-1zM302 504h1v3h-1zM317 504h1v3h-1zM337 504h1v3h-1zM164 504h1v4h-1zM223 504h1v4h-1zM256 504h1v4h-1zM435 505h1v1h-1zM455 505h1v1h-1zM436 505h1v2h-1zM456 505h1v2h-1zM322 505h1v3h-1zM357 505h1v3h-1zM377 505h1v3h-1zM195 505h1v4h-1zM243 505h1v4h-1zM276 505h1v4h-1zM342 505h1v4h-1zM184 505h1v5h-1zM434 506h1v1h-1zM454 506h1v1h-1zM296 506h1v3h-1zM362 506h1v3h-1zM154 506h1v4h-1zM215 506h1v4h-1zM263 506h1v4h-1zM382 506h1v4h-1zM437 507h1v2h-1zM457 507h1v2h-1zM316 507h1v3h-1zM433 507h1v3h-1zM453 507h1v3h-1zM174 507h1v4h-1zM204 507h1v4h-1zM235 507h1v4h-1zM283 507h1v4h-1zM303 507h1v4h-1zM336 507h1v4h-1zM356 508h1v3h-1zM165 508h1v4h-1zM224 508h1v4h-1zM255 508h1v4h-1zM323 508h1v4h-1zM376 508h1v4h-1zM438 509h1v3h-1zM458 509h1v3h-1zM194 509h1v4h-1zM244 509h1v4h-1zM275 509h1v4h-1zM295 509h1v4h-1zM343 509h1v4h-1zM363 509h1v4h-1zM432 510h1v3h-1zM452 510h1v3h-1zM153 510h1v4h-1zM185 510h1v4h-1zM214 510h1v4h-1zM264 510h1v4h-1zM315 510h1v4h-1zM383 510h1v4h-1zM173 511h1v4h-1zM205 511h1v4h-1zM234 511h1v4h-1zM284 511h1v4h-1zM304 511h1v4h-1zM335 511h1v4h-1zM355 511h1v4h-1zM166 512h1v4h-1zM225 512h1v4h-1zM254 512h1v4h-1zM324 512h1v4h-1zM375 512h1v4h-1zM439 512h1v4h-1zM459 512h1v4h-1zM193 513h1v4h-1zM245 513h1v4h-1zM274 513h1v4h-1zM294 513h1v4h-1zM344 513h1v4h-1zM364 513h1v4h-1zM431 513h1v4h-1zM451 513h1v4h-1zM152 514h1v3h-1zM186 514h1v3h-1zM213 514h1v4h-1zM265 514h1v4h-1zM314 514h1v4h-1zM384 514h1v4h-1zM172 515h1v3h-1zM206 515h1v4h-1zM233 515h1v4h-1zM285 515h1v4h-1zM334 515h1v4h-1zM354 515h1v4h-1zM305 515h1v5h-1zM167 516h1v3h-1zM226 516h1v4h-1zM253 516h1v4h-1zM325 516h1v4h-1zM374 516h1v4h-1zM440 516h1v4h-1zM460 516h1v4h-1zM151 517h1v2h-1zM187 517h1v3h-1zM192 517h1v3h-1zM246 517h1v4h-1zM273 517h1v4h-1zM293 517h1v4h-1zM345 517h1v4h-1zM365 517h1v4h-1zM430 517h1v4h-1zM450 517h1v4h-1zM110 518h41v1h-41zM705 518h72v1h-72zM171 518h1v2h-1zM212 518h1v3h-1zM266 518h1v4h-1zM313 518h1v4h-1zM385 518h1v4h-1zM681 519h24v1h-24zM168 519h1v2h-1zM207 519h1v3h-1zM232 519h1v3h-1zM286 519h1v3h-1zM333 519h1v4h-1zM353 519h1v4h-1zM604 520h77v1h-77zM170 520h1v2h-1zM188 520h1v2h-1zM191 520h1v2h-1zM227 520h1v3h-1zM252 520h1v3h-1zM306 520h1v3h-1zM326 520h1v4h-1zM373 520h1v4h-1zM441 520h1v4h-1zM461 520h1v4h-1zM169 521h1v1h-1zM567 521h37v1h-37zM211 521h1v2h-1zM247 521h1v3h-1zM272 521h1v3h-1zM292 521h1v3h-1zM346 521h1v3h-1zM366 521h1v4h-1zM429 521h1v4h-1zM449 521h1v4h-1zM189 522h2v1h-2zM208 522h1v1h-1zM528 522h39v1h-39zM231 522h1v2h-1zM267 522h1v3h-1zM287 522h1v3h-1zM312 522h1v3h-1zM386 522h1v3h-1zM209 523h2v1h-2zM228 523h1v1h-1zM508 523h20v1h-20zM251 523h1v2h-1zM307 523h1v3h-1zM332 523h1v3h-1zM352 523h1v3h-1zM390 523h1v8h-1zM229 524h2v1h-2zM248 524h1v1h-1zM484 524h24v1h-24zM271 524h1v2h-1zM291 524h1v2h-1zM327 524h1v3h-1zM347 524h1v3h-1zM372 524h1v3h-1zM442 524h1v3h-1zM462 524h1v3h-1zM249 525h2v1h-2zM268 525h1v1h-1zM473 525h11v1h-11zM288 525h1v2h-1zM311 525h1v2h-1zM367 525h1v3h-1zM387 525h1v3h-1zM428 525h1v3h-1zM448 525h1v3h-1zM269 526h2v1h-2zM468 526h5v1h-5zM290 526h1v2h-1zM308 526h1v2h-1zM331 526h1v2h-1zM351 526h1v2h-1zM467 526h1v3h-1zM289 527h1v1h-1zM328 527h1v1h-1zM310 527h1v2h-1zM348 527h1v2h-1zM371 527h1v2h-1zM443 527h1v3h-1zM463 527h1v3h-1zM309 528h1v1h-1zM329 528h2v1h-2zM368 528h1v1h-1zM350 528h1v2h-1zM388 528h1v2h-1zM427 528h1v2h-1zM447 528h1v2h-1zM349 529h1v1h-1zM369 529h2v1h-2zM466 529h1v3h-1zM389 530h1v1h-1zM444 530h1v1h-1zM464 530h1v1h-1zM426 530h1v2h-1zM446 530h1v2h-1zM445 531h1v1h-1zM465 531h1v1h-1z"/>
<rect x="391" y="163" width="35" height="38" fill="#00ff00"/>
<rect x="391" y="219" width="35" height="38" fill="#ff0000"/>
<rect x="391" y="274" width="35" height="40" fill="#00ffff"/>
<rect x="391" y="338" width="35" height="24" fill="#ffff80"/>
<rect x="391" y="388" width="35" height="37" fill="#00ff00"/>
<rect x="391" y="444" width="35" height="37" fill="#ff0000"/>
<rect x="391" y="509" width="35" height="18" fill="#00ffff"/>
<rect x="391" y="559" width="35" height="1" fill="#ffff80"/>
<rect x="706" y="107" width="3" height="39" fill="#ffff80"/>
<rect x="706" y="167" width="3" height="30" fill="#00ff00"/>
<rect x="706" y="223" width="3" height="30" fill="#ff0000"/>
<rect x="706" y="280" width="3" height="28" fill="#00ffff"/>
<path fill="#00ffff" d="M393 273h1v1h-1zM393 314h1v1h-1zM394 273h1v1h-1zM394 314h1v1h-1zM397 273h1v1h-1zM397 314h1v1h-1zM398 273h1v1h-1zM398 314h1v1h-1zM401 273h1v1h-1zM401 314h1v1h-1zM402 273h1v1h-1zM402 314h1v1h-1zM405 273h1v1h-1zM405 314h1v1h-1zM406 273h1v1h-1zM406 314h1v1h-1zM409 273h1v1h-1zM409 314h1v1h-1zM410 273h1v1h-1zM410 314h1v1h-1zM413 273h1v1h-1zM413 314h1v1h-1zM414 273h1v1h-1zM414 314h1v1h-1zM417 273h1v1h-1zM417 314h1v1h-1zM418 273h1v1h-1zM418 314h1v1h-1zM421 273h1v1h-1zM421 314h1v1h-1zM422 273h1v1h-1zM422 314h1v1h-1zM425 273h1v1h-1zM425 314h1v1h-1zM402 508h1v1h-1zM402 527h1v1h-1zM403 508h1v1h-1zM403 527h1v1h-1zM405 508h1v1h-1zM405 527h1v1h-1zM412 508h1v1h-1zM412 527h1v1h-1zM416 508h1v1h-1zM416 527h1v1h-1zM419 508h1v1h-1zM419 527h1v1h-1zM421 508h1v1h-1zM421 527h1v1h-1z"/>
</svg>
<!-- vertical scrollbar -->
<div class="a ck" style="left:777px;top:67px;width:18px;height:493px"></div>
<div class="btn" style="left:777px;top:67px;width:18px;height:18px"></div>
<svg class="a" style="left:777px;top:67px" width="18" height="18" shape-rendering="crispEdges"><path d="M8 6h1v1h-1zM7 7h3v1h-3zM6 8h5v1h-5zM5 9h7v1h-7z" fill="#000"/></svg>
<div class="btn" style="left:777px;top:85px;width:18px;height:141px"></div>
<div class="btn" style="left:777px;top:543px;width:18px;height:17px"></div>
<svg class="a" style="left:777px;top:543px" width="18" height="17" shape-rendering="crispEdges"><path d="M5 7h7v1h-7zM6 8h5v1h-5zM7 9h3v1h-3zM8 10h1v1h-1z" fill="#000"/></svg>
<!-- horizontal scrollbar -->
<div class="a ck" style="left:106px;top:560px;width:671px;height:18px"></div>
<div class="btn" style="left:106px;top:560px;width:18px;height:18px"></div>
<svg class="a" style="left:107px;top:560px" width="17" height="18" shape-rendering="crispEdges"><path d="M5 8h1v1h-1zM6 7h1v3h-1zM7 6h1v5h-1zM8 5h1v7h-1z" fill="#000"/></svg>
<div class="btn" style="left:124px;top:560px;width:446px;height:18px"></div>
<div class="btn" style="left:760px;top:560px;width:17px;height:18px"></div>
<svg class="a" style="left:760px;top:560px" width="17" height="18" shape-rendering="crispEdges"><path d="M11 8h1v1h-1zM10 7h1v3h-1zM9 6h1v5h-1zM8 5h1v7h-1z" fill="#000"/></svg>
<div class="a" style="left:777px;top:560px;width:18px;height:18px;background:#c0c0c0"></div>
<!-- status bar -->
<div class="a" style="left:0;top:579px;width:795px;height:1px;background:#dfdfdf"></div>
<div class="t" style="left:-1px;top:583px;font-size:12px;color:#000">就绪</div>
<div class="a" style="left:703px;top:582px;width:30px;height:17px;border-top:1px solid #808080;border-left:1px solid #808080;border-right:1px solid #fff"></div>
<div class="a" style="left:735px;top:582px;width:30px;height:17px;border-top:1px solid #808080;border-left:1px solid #808080;border-right:1px solid #fff"></div>
<div class="t" style="left:736px;top:584px;font-size:12px;color:#000">数字</div>
<div class="a" style="left:767px;top:582px;width:28px;height:17px;border-top:1px solid #808080;border-left:1px solid #808080"></div>
</body></html>
